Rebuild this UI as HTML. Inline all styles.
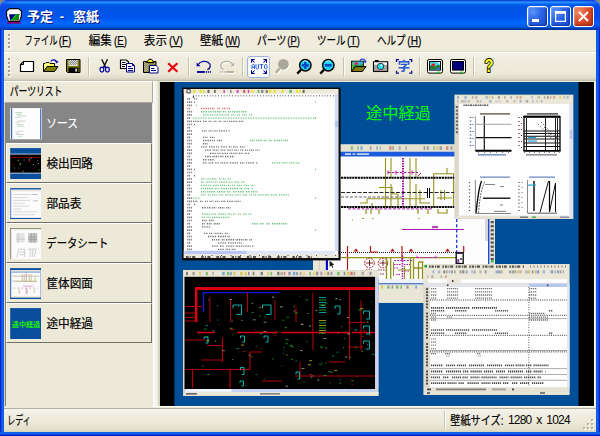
<!DOCTYPE html>
<html lang="ja"><head><meta charset="utf-8"><title>予定 - 窓紙</title>
<style>
html,body{margin:0;padding:0}
body{width:600px;height:436px;overflow:hidden;background:#86867e;font-family:"Liberation Sans","Noto Sans CJK JP",sans-serif;font-size:12px;position:relative}
.abs{position:absolute}
svg{position:absolute;overflow:visible}
svg text{font-family:"Liberation Sans","Noto Sans CJK JP",sans-serif}

#win{position:absolute;left:0;top:0;width:600px;height:436px;background:#ece9d8;border-radius:6.500px 6.500px 0 0;overflow:hidden}
#title{position:absolute;left:0;top:0;width:600px;height:30px;
 background:linear-gradient(to bottom,#0a44d4 0%,#0a4ee0 3%,#3593ff 7%,#288eff 9%,#127dff 11%,#036ffc 13%,#0262ee 14%,#0057e5 20%,#0054e3 24%,#0055eb 56%,#005bf5 66%,#026afe 76%,#0062ef 86%,#0052d6 92%,#0040ab 94%,#003092 100%)}
#title:before{content:"";position:absolute;left:0;top:0;width:18px;height:30px;background:linear-gradient(to right,#1638e6 0%,rgba(22,56,230,0) 100%);opacity:.5}
#title:after{content:"";position:absolute;right:0;top:0;width:18px;height:30px;background:linear-gradient(to left,#1638e6 0%,rgba(22,56,230,0) 100%);opacity:.5}
#bl{position:absolute;left:0;top:30px;width:4px;height:406px;background:linear-gradient(to right,#0019cf 0,#0831d9 25%,#166aee 50%,#0855dd 100%)}
#br{position:absolute;left:596px;top:30px;width:4px;height:406px;background:linear-gradient(to left,#0019cf 0,#0831d9 25%,#166aee 50%,#0855dd 100%)}
#bb{position:absolute;left:0;top:432px;width:600px;height:4px;background:linear-gradient(to bottom,#0855dd 0,#166aee 35%,#0831d9 70%,#0019cf 100%)}
.tb{position:absolute;top:6px;width:21px;height:21px;box-sizing:border-box;border:1px solid #fff;border-radius:3px;
 background:radial-gradient(circle at 25% 25%,#5b93f7 0%,#2a62e6 45%,#1a49c8 100%);box-shadow:inset -1px -1px 2px rgba(0,20,120,.55),inset 1px 1px 1px rgba(160,200,255,.5)}
#bclose{background:radial-gradient(circle at 25% 25%,#ee8a66 0%,#db4a26 50%,#b5301a 100%);box-shadow:inset -1px -1px 2px rgba(110,20,0,.55),inset 1px 1px 1px rgba(255,200,180,.5)}
#menubar{position:absolute;left:4px;top:30px;width:592px;height:22px;background:#efecde}
#mline1{position:absolute;left:4px;top:51px;width:592px;height:1px;background:#dcd8c6}
#mline2{position:absolute;left:4px;top:52px;width:592px;height:1px;background:#fff}
.grip{position:absolute;width:3px;background-image:linear-gradient(to bottom,#a39f8e 0,#a39f8e 2px,transparent 2px,transparent 4px),linear-gradient(to bottom,transparent 0,transparent 1px,#fff 1px,#fff 3px,transparent 3px);background-size:2px 4px,2px 4px;background-position:0 0,1px 0;background-repeat:repeat-y}
#status{position:absolute;left:4px;top:408px;width:592px;height:24px;background:linear-gradient(to bottom,#b4b1a0 0,#b4b1a0 1px,#f5f4ec 1px,#f1efe4 5px,#ece9d8 14px,#e2deca 22px,#d6d1b8 24px)}
#stxt{position:absolute;left:508px;top:413px;font-size:12px;line-height:14px;color:#000;letter-spacing:-.8px;word-spacing:2.3px;white-space:pre}

#toolbar{position:absolute;left:4px;top:53px;width:592px;height:28px;background:linear-gradient(to bottom,#f3f1e6 0,#efecde 8px,#ece9d8 20px,#e0dccb 25px,#cfcbb9 27px,#b9b5a4 28px)}
.sep{position:absolute;top:57px;width:1px;height:19px;background:#c5c2b2}
.sep:after{content:"";position:absolute;left:1px;top:0;width:1px;height:19px;background:#fbfaf5}
#auto{position:absolute;left:247px;top:56px;width:23px;height:22px;box-sizing:border-box;border:1px solid #9db4df;border-radius:3px;background:#fdfdfb}

#panel{position:absolute;left:4px;top:81px;width:156px;height:326px;background:#ece9d8}
#phead{position:absolute;left:4px;top:81px;width:149px;height:22px;box-sizing:border-box;background:#ece9d8;border-top:1px solid #fff;border-left:1px solid #fff;border-right:1px solid #aca899;border-bottom:1px solid #aca899}
.it{position:absolute;left:6px;width:146px;height:40px;box-sizing:border-box;background:#ece9d8;border-top:1px solid #fff;border-left:1px solid #fff;border-right:1px solid #716f64;border-bottom:1px solid #716f64}
.it.sel{background:#868686;border-color:#868686}
#pl{position:absolute;left:4px;top:103px;width:2px;height:303px;background:linear-gradient(to right,#d8d4c2 0,#d8d4c2 1px,#85836f 1px)}
#split{position:absolute;left:153px;top:81px;width:7px;height:326px;background:linear-gradient(to right,#fff 0,#fff 1px,#f7f6f0 1px,#f4f2e8 4px,#e4e1d0 5px,#cdc9b7 7px)}
#vline{position:absolute;left:153px;top:406px;width:443px;height:1px;background:#fff}
#vr{position:absolute;left:594px;top:82px;width:2px;height:325px;background:linear-gradient(to right,#fff 0,#fff 1px,#ece9d8 1px)}

</style></head>
<body>
<div id="win">
<div id="title"></div>
<svg style="left:6px;top:8px" width="16" height="16" viewBox="0 0 16 16">
<path d="M3.500 .6H12.500L15.400 3.200V8L13.500 13.400H2.500L.6 8V3.200Z" fill="#fff" stroke="#000" stroke-width="1.100" stroke-linejoin="round"/>
<path d="M3 6.200H13.400L12.300 12.300H4.100Z" fill="#00007c"/>
<path d="M5 12.300L10.300 6.200H13.400L12.300 12.300Z" fill="#008a00"/>
<path d="M5 12.300L9.800 6.800L10.800 7.200L6.300 12.300Z" fill="#00e400"/>
<rect x="11.300" y="11.200" width="1" height="1.100" fill="#f00"/>
<path d="M1 15.800V15L2 14H14L15 15V15.800Z" fill="#86007e"/>
</svg>
<svg style="left:0;top:0" width="200" height="30" viewBox="0 0 200 30" aria-label="予定 - 窓紙" role="img"><title>予定 - 窓紙</title><text y="22" font-size="13" font-weight="bold" fill="#0a1883"><tspan x="28">予定</tspan><tspan x="60.800">-</tspan><tspan x="74">窓紙</tspan></text><text y="21" font-size="13" font-weight="bold" fill="#fff"><tspan x="27">予定</tspan><tspan x="59.800">-</tspan><tspan x="73">窓紙</tspan></text></svg>
<div class="tb" id="bmin" style="left:527px"><svg style="left:0;top:0" width="19" height="19" viewBox="0 0 19 19"><rect x="4" y="12" width="7" height="3" fill="#fff"/></svg></div>
<div class="tb" id="bmax" style="left:550px"><svg style="left:0;top:0" width="19" height="19" viewBox="0 0 19 19"><path d="M4 4h11v11h-11zM5.200 6.800v7h8.600v-7z" fill="#fff" fill-rule="evenodd"/></svg></div>
<div class="tb" id="bclose" style="left:573px"><svg style="left:0;top:0" width="19" height="19" viewBox="0 0 19 19"><path d="M5 5l9 9M14 5l-9 9" stroke="#fff" stroke-width="2" stroke-linecap="butt"/></svg></div>
<div id="bl"></div><div id="br"></div>
<div id="menubar"></div><div id="mline1"></div><div id="mline2"></div>
<div class="grip" style="left:8px;top:34px;height:16px"></div>
<svg style="left:0;top:0" width="600" height="60" viewBox="0 0 600 60" aria-label="ファイル(F) 編集(E) 表示(V) 壁紙(W) パーツ(P) ツール(T) ヘルプ(H)" role="img"><title>ファイル(F) 編集(E) 表示(V) 壁紙(W) パーツ(P) ツール(T) ヘルプ(H)</title><g font-size="12" fill="#000" stroke="#000" stroke-width=".2"><text x="24.400" y="44.700" textLength="33.100" lengthAdjust="spacingAndGlyphs">ファイル</text><text x="58.800" y="44.800" textLength="12.500" lengthAdjust="spacingAndGlyphs">(F)</text><text x="88.800" y="44.700" textLength="23.100" lengthAdjust="spacingAndGlyphs">編集</text><text x="114" y="44.800" textLength="12.900" lengthAdjust="spacingAndGlyphs">(E)</text><text x="143.800" y="44.700" textLength="23.200" lengthAdjust="spacingAndGlyphs">表示</text><text x="168.900" y="44.800" textLength="14" lengthAdjust="spacingAndGlyphs">(V)</text><text x="200" y="44.700" textLength="23.200" lengthAdjust="spacingAndGlyphs">壁紙</text><text x="224.900" y="44.800" textLength="15.400" lengthAdjust="spacingAndGlyphs">(W)</text><text x="257" y="44.700" textLength="29.300" lengthAdjust="spacingAndGlyphs">パーツ</text><text x="287.300" y="44.800" textLength="12.500" lengthAdjust="spacingAndGlyphs">(P)</text><text x="317" y="44.700" textLength="28.600" lengthAdjust="spacingAndGlyphs">ツール</text><text x="347" y="44.800" textLength="12.800" lengthAdjust="spacingAndGlyphs">(T)</text><text x="377" y="44.700" textLength="28.600" lengthAdjust="spacingAndGlyphs">ヘルプ</text><text x="407.300" y="44.800" textLength="14" lengthAdjust="spacingAndGlyphs">(H)</text></g><rect x="61.5" y="46.100" width="7.0" height="1" fill="#000"/><rect x="116.7" y="46.100" width="7.4" height="1" fill="#000"/><rect x="171.9" y="46.100" width="7.9" height="1" fill="#000"/><rect x="227.5" y="46.100" width="10.3" height="1" fill="#000"/><rect x="289.8" y="46.100" width="7.4" height="1" fill="#000"/><rect x="349.7" y="46.100" width="7.4" height="1" fill="#000"/><rect x="409.9" y="46.100" width="8.8" height="1" fill="#000"/></svg>

<div id="toolbar"></div>
<div class="grip" style="left:8px;top:58px;height:20px"></div>
<div class="sep" style="left:88px"></div><div class="sep" style="left:188px"></div><div class="sep" style="left:242px"></div><div class="sep" style="left:343px"></div><div class="sep" style="left:419px"></div><div class="sep" style="left:473px"></div>
<div id="auto"></div>
<svg style="left:0;top:0" width="600" height="90" viewBox="0 0 600 90"><path d="M23.500 61.500H33.500V71.500H20.500V64.500Z" fill="#fff" stroke="#000" stroke-width="1.200" stroke-linejoin="miter"/><path d="M23.500 61.500V64.500H20.500" fill="none" stroke="#000" stroke-width="1"/><path d="M43.500 71.500V63.500H45l1-1h3l1 1h4.500V66" fill="#ffff60" stroke="#000" stroke-width="1"/><path d="M44 64h10v3h-8l-2 4z" fill="#ffff50"/><path d="M44.500 64.500h1v1h-1zM46.500 64.500h1v1h-1zM48.500 64.500h1v1h-1zM45.500 65.500h1v1h-1zM47.500 65.500h1v1h-1zM44.500 66.500h1v1h-1zM44.500 68.500h1v1h-1z" fill="#fff"/><path d="M43.500 71.500L47 66.500H58L54.500 71.500Z" fill="#808000" stroke="#000" stroke-width="1" stroke-linejoin="round"/><path d="M50.800 61.300C52.300 59.300 55.300 59.300 56.700 61.600" fill="none" stroke="#0000a8" stroke-width="1.250"/><path d="M54.800 61.200H58.700L56.800 63.600Z" fill="#0000a8"/><path d="M66.500 59.500H80V72.500H67.500L66.500 71.500Z" fill="#808000" stroke="#000" stroke-width="1"/><rect x="68.500" y="60" width="9" height="6" fill="#dcdcdc"/><path d="M69 60h1v1h-1zM71 60h1v1h-1zM73 60h1v1h-1zM75 60h1v1h-1zM70 61h1v1h-1zM72 61h1v1h-1zM74 61h1v1h-1zM76 61h1v1h-1zM69 62h1v1h-1zM71 62h1v1h-1zM73 62h1v1h-1zM75 62h1v1h-1zM70 63h1v1h-1zM72 63h1v1h-1zM74 63h1v1h-1zM76 63h1v1h-1zM69 64h1v1h-1zM71 64h1v1h-1zM73 64h1v1h-1zM75 64h1v1h-1z" fill="#8a8a8a"/><rect x="68.500" y="67.500" width="10" height="5" fill="#000"/><rect x="75.300" y="68.600" width="1.800" height="3" fill="#d8d8d8"/><path d="M101.700 59.300L105.600 67.300M107.500 59.300L103.600 67.300" stroke="#000" stroke-width="1.300" fill="none"/><ellipse cx="101.900" cy="69.600" rx="1.900" ry="2.450" fill="none" stroke="#0000a0" stroke-width="1.200"/><ellipse cx="107.400" cy="69.600" rx="1.900" ry="2.450" fill="none" stroke="#0000a0" stroke-width="1.200"/><path d="M103.300 67.800L104.600 66.300M106 67.800L104.700 66.300" stroke="#0000a0" stroke-width="1.200"/><path d="M120.500 60H126.500L128.500 62V68.500H120.500Z" fill="#fff" stroke="#000" stroke-width="1.200"/><path d="M122 62.500h3.500M122 64.500h4.500M122 66.500h3" stroke="#000" stroke-width="1"/><path d="M126.500 63.500H132.500L134.500 65.500V72H126.500Z" fill="#fff" stroke="#000084" stroke-width="1"/><path d="M128 66.500h3.500M128 68.500h5M128 70.500h5" stroke="#000084" stroke-width="1"/><path d="M132.500 63.500V65.500H134.500" fill="none" stroke="#000084" stroke-width="1"/><path d="M143.500 61.500H156V72.500H143.500Z" fill="#8a8640" stroke="#000" stroke-width="1"/><path d="M144 62h1v1h-1zM146 62h1v1h-1zM144 64h1v1h-1zM146 64h1v1h-1zM148 64h1v1h-1zM145 63h1v1h-1zM147 63h1v1h-1zM145 65h1v1h-1zM147 65h1v1h-1zM144 66h1v1h-1zM146 66h1v1h-1zM145 67h1v1h-1zM147 67h1v1h-1zM144 68h1v1h-1zM146 68h1v1h-1zM145 69h1v1h-1zM147 69h1v1h-1zM144 70h1v1h-1zM146 70h1v1h-1zM145 71h1v1h-1zM153 62h1v1h-1zM154 63h1v1h-1z" fill="#b8b8a0"/><path d="M146.500 62.500L149 59.300H151.500L154 62.500Z" fill="#ffff30" stroke="#000" stroke-width="1" stroke-linejoin="round"/><path d="M149.500 65.500H156L158 67.500V73H149.500Z" fill="#fff" stroke="#000084" stroke-width="1"/><path d="M151 68.500h3.500M151 70.500h5" stroke="#000084" stroke-width="1"/><path d="M168.200 63.200L177.400 71.800M177.400 63.200L168.200 71.800" stroke="#e8000c" stroke-width="2.200" fill="none"/><path d="M198.400 64.400A6.100 4.500 0 1 1 207.300 69.700" fill="none" stroke="#000090" stroke-width="1.250"/><path d="M196.600 62.400V66.200H200.500Z" fill="#000090"/><rect x="197" y="71" width="7.800" height="1.900" fill="#000090"/><rect x="205.800" y="71" width="1" height="1.900" fill="#000090"/><rect x="207.800" y="71" width="1" height="1.900" fill="#000090"/><rect x="209.800" y="71" width="1" height="1.900" fill="#000090"/><g transform="translate(431 0) scale(-1 1)"><g transform="translate(-1 1)"><path d="M198.400 64.400A6.100 4.500 0 1 1 207.300 69.700" fill="none" stroke="#ffffff" stroke-width="1.250"/><path d="M196.600 62.400V66.200H200.500Z" fill="#ffffff"/><rect x="197" y="71" width="7.800" height="1.900" fill="#ffffff"/><rect x="205.800" y="71" width="1" height="1.900" fill="#ffffff"/><rect x="207.800" y="71" width="1" height="1.900" fill="#ffffff"/><rect x="209.800" y="71" width="1" height="1.900" fill="#ffffff"/></g><path d="M198.400 64.400A6.100 4.500 0 1 1 207.300 69.700" fill="none" stroke="#b2af9f" stroke-width="1.250"/><path d="M196.600 62.400V66.200H200.500Z" fill="#b2af9f"/><rect x="197" y="71" width="7.800" height="1.900" fill="#b2af9f"/><rect x="205.800" y="71" width="1" height="1.900" fill="#b2af9f"/><rect x="207.800" y="71" width="1" height="1.900" fill="#b2af9f"/><rect x="209.800" y="71" width="1" height="1.900" fill="#b2af9f"/></g><path d="M254.700 59.500H251.500V62.700" fill="none" stroke="#000098" stroke-width="1.050"/><path d="M251.900 59.900L254.500 62.500" stroke="#000098" stroke-width="1.050"/><path d="M263.300 59.500H266.500V62.700" fill="none" stroke="#000098" stroke-width="1.050"/><path d="M266.100 59.900L263.500 62.500" stroke="#000098" stroke-width="1.050"/><path d="M254.700 73.500H251.500V70.300" fill="none" stroke="#000098" stroke-width="1.050"/><path d="M251.900 73.100L254.500 70.500" stroke="#000098" stroke-width="1.050"/><path d="M263.300 73.500H266.500V70.300" fill="none" stroke="#000098" stroke-width="1.050"/><path d="M266.100 73.100L263.500 70.500" stroke="#000098" stroke-width="1.050"/><g fill="none" stroke="#2a62d8" stroke-width="1" stroke-linejoin="miter"><path d="M252 69V65.200L252.700 64.500H253.800L254.500 65.200V69M252 67.200H254.500"/><path d="M256 64.200V68.300L256.700 68.800H257.800L258.500 68.300V64.200"/><path d="M259.700 64.600H263.300M261.500 64.600V69"/><path d="M264.500 65.200L265.200 64.500H266.300L267 65.200V68.100L266.300 68.800H265.200L264.500 68.100Z"/></g><path d="M279.800 68.300L276 72.800" stroke="#fff" stroke-width="2.200" transform="translate(1 1)"/><circle cx="284.300" cy="65.200" r="5.400" fill="#fff"/><path d="M279.800 68.300L276 72.800" stroke="#aaa799" stroke-width="2.200"/><circle cx="283.400" cy="64.300" r="5.400" fill="#aaa799"/><path d="M301.0 69.700L297.3 73.600" stroke="#000" stroke-width="2.300"/><circle cx="305.300" cy="65.200" r="5.700" fill="#16d4ff" stroke="#000" stroke-width="1.500"/><path d="M302.800 61.800a4.200 4.200 0 0 1 5 0" fill="none" stroke="#b8f4ff" stroke-width="1"/><rect x="301.800" y="64" width="7" height="2.600" fill="#0c4cc0"/><rect x="304.0" y="61.800" width="2.600" height="7" fill="#0c4cc0"/><path d="M324.0 69.700L320.3 73.600" stroke="#000" stroke-width="2.300"/><circle cx="328.300" cy="65.200" r="5.700" fill="#16d4ff" stroke="#000" stroke-width="1.500"/><path d="M325.800 61.800a4.200 4.200 0 0 1 5 0" fill="none" stroke="#b8f4ff" stroke-width="1"/><rect x="324.800" y="64" width="7" height="2.600" fill="#0c4cc0"/><path d="M351.600 71.500V61.300H363.200V66.500" fill="#2c9c48" stroke="#000" stroke-width="1.100"/><rect x="352.800" y="61.800" width="10" height="5" fill="#26a044"/><path d="M352.800 61.800H362.800V63.600L359.500 65.300L356.500 63.800L352.800 65.500Z" fill="#38b4e8"/><ellipse cx="356.300" cy="63.500" rx="1.700" ry="1.200" fill="#e82020"/><path d="M352.300 62.500V70" stroke="#f0e820" stroke-width="1" stroke-dasharray="1 1"/><path d="M351.600 71.500L355.200 66.600H366L362.400 71.500Z" fill="#7c7c18" stroke="#000" stroke-width="1" stroke-linejoin="round"/><path d="M359.800 60.600C361.300 58.700 364.200 58.700 365.300 60.800" fill="none" stroke="#1c3cc8" stroke-width="1.200"/><path d="M366.600 60.400L365.600 63.300L362.900 61.300Z" fill="#1c3cc8"/><rect x="375" y="60" width="3.600" height="2" fill="#000"/><rect x="373.500" y="61.800" width="14.200" height="9.700" fill="#a4a4a4" stroke="#000" stroke-width="1.100"/><rect x="374.100" y="62.400" width="13" height="2.400" fill="#f4f4f4"/><circle cx="380.600" cy="66.400" r="3.400" fill="#222"/><circle cx="380.600" cy="66.400" r="2.700" fill="#20e0f8"/><circle cx="381.400" cy="65.500" r="1" fill="#d8fcff"/><g fill="none" stroke="#0c0c8c" stroke-width="1.300"><path d="M399 59.600H396.500V62M396.500 70.800V73.200H399M409.200 59.600H411.700V62M411.700 70.800V73.200H409.200"/></g><text x="397.700" y="71.300" font-size="12.400" font-weight="bold" fill="#2458d0">字</text><rect x="427.500" y="59.500" width="15" height="13.600" rx="1.600" fill="#fff" stroke="#000" stroke-width="1"/><rect x="429.500" y="61.500" width="11" height="8.600" fill="#00007c" stroke="#000" stroke-width="1"/><rect x="437.400" y="71.600" width="2.400" height="1.500" fill="#10d010"/><rect x="430" y="62" width="10" height="7.600" fill="#48d8f0"/><path d="M437 62H440V64.200Z" fill="#f4ffff"/><path d="M430 69.600V66l2.500-1 3 1.500 2.500-2 2 1.500V69.600Z" fill="#1f7a2c"/><ellipse cx="433.300" cy="65" rx="1.900" ry="1.400" fill="#f01818"/><path d="M435 69.600l2.500-1.800H440V69.600z" fill="#4468e0"/><rect x="450.500" y="59.500" width="15" height="13.600" rx="1.600" fill="#fff" stroke="#000" stroke-width="1"/><rect x="452.500" y="61.500" width="11" height="8.600" fill="#00007c" stroke="#000" stroke-width="1"/><rect x="460.400" y="71.600" width="2.400" height="1.500" fill="#10d010"/><text x="484.600" y="72.200" font-family="Liberation Sans, sans-serif" font-weight="bold" font-size="17.500" fill="#ffff18" stroke="#000" stroke-width="1.800" stroke-linejoin="round" paint-order="stroke" textLength="9" lengthAdjust="spacingAndGlyphs">?</text></svg>

<div id="panel"></div>
<div id="phead"></div>
<div class="it sel" style="top:103px"></div><div class="it" style="top:143px"></div><div class="it" style="top:183px"></div><div class="it" style="top:223px"></div><div class="it" style="top:263px"></div><div class="it" style="top:303px"></div>
<div id="pl"></div>
<div id="split"></div>
<svg style="left:0;top:0" width="160" height="410" viewBox="0 0 160 410" aria-label="パーツリスト ソース 検出回路 部品表 データシート 筐体図面 途中経過" role="img"><title>パーツリスト ソース 検出回路 部品表 データシート 筐体図面 途中経過</title><text x="9.800" y="96.200" font-size="12" fill="#000" stroke="#000" stroke-width=".2" textLength="52.400" lengthAdjust="spacingAndGlyphs">パーツリスト</text><rect x="10.200" y="108.100" width="31.600" height="31.200" fill="#fdfdfd"/><rect x="11.100" y="108.39999999999999" width="1.100" height="30.600" fill="#2a5cb0"/><rect x="40.200" y="108.39999999999999" width="1" height="30.600" fill="#2a5cb0"/><rect x="15.200" y="112.100" width="7" height=".8" fill="#a8d4a8"/><rect x="16.200" y="113.800" width="5" height=".8" fill="#c4c4c4"/><rect x="17.200" y="115.500" width="9" height=".8" fill="#b4dcb4"/><rect x="15.200" y="117.200" width="6" height=".8" fill="#d0d0d0"/><rect x="17.200" y="120.600" width="8" height=".8" fill="#c4c4c4"/><rect x="15.200" y="122.300" width="5" height=".8" fill="#b4dcb4"/><rect x="16.200" y="124.0" width="7" height=".8" fill="#d0d0d0"/><rect x="17.200" y="125.700" width="7" height=".8" fill="#a8d4a8"/><rect x="17.200" y="130.800" width="6" height=".8" fill="#d0d0d0"/><rect x="15.200" y="132.500" width="4" height=".8" fill="#a8d4a8"/><rect x="16.200" y="134.200" width="8" height=".8" fill="#c4c4c4"/><rect x="17.200" y="135.900" width="5" height=".8" fill="#b4dcb4"/><rect x="10.200" y="148.100" width="30.800" height="30.900" fill="#0a4f9e"/><rect x="10.200" y="153.700" width="30.800" height="19.800" fill="#e8ebf8"/><rect x="10.200" y="154.500" width="30.800" height="18.200" fill="#000"/><rect x="11.200" y="157.100" width="29" height=".9" fill="#900000"/><rect x="13.200" y="164.100" width="0.80" height="1.60" fill="#c00000" opacity=".85"/><rect x="17.700" y="159.600" width="1.20" height="1.20" fill="#c8c800" opacity=".85"/><rect x="19.700" y="163.100" width="0.96" height="2.00" fill="#c8c800" opacity=".85"/><rect x="23.200" y="159.600" width="1.60" height="0.80" fill="#00a0a0" opacity=".85"/><rect x="28.700" y="158.600" width="1.20" height="3.200" fill="#e02020" opacity=".85"/><rect x="28.700" y="158.600" width="1.20" height="1.04" fill="#00d090" opacity=".85"/><rect x="30.700" y="157.600" width="0.96" height="0.96" fill="#e0e0e0" opacity=".85"/><rect x="32.700" y="164.100" width="1.04" height="1.20" fill="#c0c0c0" opacity=".85"/><rect x="37.200" y="160.100" width="0.80" height="1.04" fill="#60a060" opacity=".85"/><rect x="38.700" y="169.100" width="0.80" height="1.60" fill="#00c000" opacity=".85"/><rect x="14.200" y="167.100" width="0.80" height="1.60" fill="#40a040" opacity=".85"/><rect x="33.200" y="167.600" width="1.04" height="1.04" fill="#d01010" opacity=".85"/><rect x="22.700" y="171.100" width="0.80" height="0.80" fill="#ffffff" opacity=".85"/><rect x="37.700" y="163.100" width="1.20" height="0.80" fill="#d0d0d0" opacity=".85"/><rect x="18.200" y="168.100" width="0.80" height="0.80" fill="#808000" opacity=".85"/><rect x="10.200" y="188.100" width="30.800" height="30.900" fill="#fbfbfb"/><rect x="10.200" y="188.100" width="30.800" height="1.600" fill="#0a4f9e"/><rect x="10.200" y="188.100" width="1" height="30.900" fill="#5a84c4"/><rect x="11.200" y="189.700" width="29.800" height="1.800" fill="#ebe8dc"/><rect x="10.200" y="217.900" width="30.800" height="1.100" fill="#0a4f9e"/><rect x="13.200" y="194.100" width="24" height=".8" fill="#cfcfcf"/><rect x="13.200" y="197.0" width="14" height=".8" fill="#cfcfcf"/><rect x="13.200" y="199.900" width="17" height=".8" fill="#cfcfcf"/><rect x="13.200" y="202.800" width="12" height=".8" fill="#cfcfcf"/><rect x="13.200" y="205.700" width="16" height=".8" fill="#cfcfcf"/><rect x="13.200" y="208.600" width="8" height=".8" fill="#cfcfcf"/><rect x="13.200" y="211.500" width="24" height=".8" fill="#cfcfcf"/><rect x="13.200" y="214.400" width="22" height=".8" fill="#cfcfcf"/><rect x="33.200" y="194.100" width="4" height=".9" fill="#9ab0e0"/><rect x="33.200" y="200.100" width="5" height="1.500" fill="#d0d0d8"/><rect x="10.200" y="228.100" width="30.800" height="30.900" fill="#fbfbfb"/><rect x="10.200" y="228.100" width="30.800" height="1" fill="#85836f"/><rect x="10.200" y="228.100" width="1" height="30.900" fill="#85836f"/><rect x="11.200" y="229.100" width="29.800" height="1.300" fill="#eeebe0"/><rect x="16.200" y="233.100" width="8.500" height="9.500" fill="#e4e4e4"/><rect x="28.200" y="233.100" width="9" height="9.500" fill="#c4c4c4"/><g stroke="#9a9a9a" stroke-width=".8"><path d="M28.200 237.100h9M28.200 239.600h9M31.200 233.100v9.500M34.200 233.100v9.500"/></g><g stroke="#c4c4c4" stroke-width=".8" fill="none"><path d="M18.200 233.100v9.500M16.200 239.100h8.500M16.700 257.100l2-8h6v8M19.200 252.100h6M19.200 254.600h6M28.200 249.100h8l-2 8M30.200 249.100v8M33.200 249.100l-1 8"/></g><rect x="10.200" y="268.100" width="30.800" height="30.900" fill="#fbfbfb"/><rect x="10.200" y="268.100" width="30.800" height="2" fill="#0a4f9e"/><rect x="10.200" y="268.100" width="1" height="30.900" fill="#2a5cb0"/><rect x="40.0" y="270.100" width="1" height="27" fill="#a8c0ec"/><rect x="11.200" y="270.100" width="28.800" height="1.500" fill="#e8e4d4"/><rect x="11.200" y="271.600" width="28.800" height="1" fill="#6a94e0"/><rect x="10.200" y="297.40000000000003" width="30.800" height="1.600" fill="#0a4f9e"/><rect x="11.200" y="295.90000000000003" width="28.800" height="1.500" fill="#ece8da"/><g stroke-width=".8" fill="none" opacity=".8"><path d="M12.200 276.100h27M12.200 281.100h24" stroke="#b0a0a8"/><path d="M22.200 274.100v8M24.200 274.100v8M29.200 274.100v8M31.200 274.100v8M35.200 276.100v5M15.200 281.600h22M19.200 289.100v5M27.200 289.100v5M34.200 289.100v4" stroke="#b4b060"/><path d="M26.200 273.100v9M23.200 286.100h10M26.200 288.100v6" stroke="#c070c0"/><path d="M13.200 288.100h25" stroke="#c09090" stroke-dasharray="2 2"/></g><rect x="10.200" y="308.100" width="30.800" height="30.900" fill="#0a4f9e"/><text x="11.800" y="326.900" font-size="7" font-weight="bold" fill="#20f000" textLength="28.400" lengthAdjust="spacingAndGlyphs">途中経過</text><g font-size="12" stroke-width=".2"><text x="46.300" y="128.300" fill="#fff" stroke="#fff" textLength="31.700" lengthAdjust="spacingAndGlyphs">ソース</text><text x="46.400" y="168.300" fill="#000" stroke="#000" textLength="46.600" lengthAdjust="spacingAndGlyphs">検出回路</text><text x="46.400" y="208.300" fill="#000" stroke="#000" textLength="34.900" lengthAdjust="spacingAndGlyphs">部品表</text><text x="46.300" y="248.300" fill="#000" stroke="#000" textLength="62" lengthAdjust="spacingAndGlyphs">データシート</text><text x="46.500" y="288.300" fill="#000" stroke="#000" textLength="46.500" lengthAdjust="spacingAndGlyphs">筐体図面</text><text x="46.400" y="328.300" fill="#000" stroke="#000" textLength="46.600" lengthAdjust="spacingAndGlyphs">途中経過</text></g></svg>
<div id="vline"></div><div id="vr"></div>

<svg style="left:160px;top:82px" width="434" height="324" viewBox="160 82 434 324" aria-label="途中経過" role="img"><title>途中経過</title><rect x="160" y="82" width="434" height="324" fill="#000"/><rect x="174.400" y="82" width="404.100" height="324" fill="#004e98"/><g><rect x="340" y="144.500" width="155" height="135" fill="#fdfdfd"/><rect x="313" y="255" width="27" height="16" fill="#fdfdfd"/><rect x="313" y="255" width="12.800" height="16" fill="#e9e6d8"/><rect x="319" y="255" width="0.800" height="16" fill="#cfcbbb"/><rect x="325.800" y="255" width="2.200" height="16" fill="#0000d8"/><path d="M329.600 260.800V266.800L331.200 265.400L332.400 267.800L333.300 267.300L332.200 265L334.200 264.800Z" fill="#111"/><rect x="340" y="144.500" width="154" height="7.200" fill="#e6e2d2"/><rect x="350.700" y="146.300" width="2.400" height="3.600" fill="#30a030" opacity="0.5"/><rect x="357.100" y="146.300" width="1.600" height="3.600" fill="#30a030" opacity="0.5"/><rect x="360.300" y="146.300" width="2.400" height="3.600" fill="#2080d0" opacity="0.5"/><rect x="369.900" y="146.300" width="1.600" height="3.600" fill="#505870" opacity="0.5"/><rect x="376.300" y="146.300" width="1.600" height="3.600" fill="#2080d0" opacity="0.5"/><rect x="379.500" y="146.300" width="1.600" height="3.600" fill="#8a8a8a" opacity="0.5"/><rect x="389.100" y="146.300" width="2.400" height="3.600" fill="#c03030" opacity="0.5"/><rect x="392.300" y="146.300" width="1.600" height="3.600" fill="#505870" opacity="0.5"/><rect x="398.700" y="146.300" width="2" height="3.600" fill="#707070" opacity="0.5"/><rect x="405.100" y="146.300" width="1.600" height="3.600" fill="#707070" opacity="0.5"/><rect x="423.600" y="146.300" width="1.600" height="3.600" fill="#404040" opacity="0.5"/><rect x="426.800" y="146.300" width="2" height="3.600" fill="#505870" opacity="0.5"/><rect x="433.200" y="146.300" width="1.600" height="3.600" fill="#30a030" opacity="0.5"/><rect x="436.400" y="146.300" width="2" height="3.600" fill="#c8b400" opacity="0.5"/><rect x="439.600" y="146.300" width="2.400" height="3.600" fill="#505870" opacity="0.5"/><rect x="446" y="146.300" width="2.400" height="3.600" fill="#c03030" opacity="0.5"/><rect x="450.500" y="146.300" width="2" height="3.600" fill="#505870" opacity="0.5"/><rect x="455" y="146.300" width="1.600" height="3.600" fill="#c03030" opacity="0.5"/><rect x="461.400" y="146.300" width="1.600" height="3.600" fill="#707070" opacity="0.5"/><rect x="465.900" y="146.300" width="2.400" height="3.600" fill="#8a8a8a" opacity="0.5"/><rect x="469.100" y="146.300" width="1.600" height="3.600" fill="#30a030" opacity="0.5"/><rect x="476.800" y="146.300" width="1.600" height="3.600" fill="#2080d0" opacity="0.5"/><rect x="483.200" y="146.300" width="1.600" height="3.600" fill="#505870" opacity="0.5"/><rect x="486.400" y="146.300" width="2.400" height="3.600" fill="#8040c0" opacity="0.5"/><rect x="340" y="151.700" width="154" height="4.800" fill="#1c5cdc"/><rect x="345" y="153.300" width="6" height="1.600" fill="#fff" opacity=".85"/><rect x="352.500" y="153.300" width="3" height="1.600" fill="#fff" opacity=".7"/><rect x="357" y="153.300" width="12" height="1.600" fill="#fff" opacity=".8"/><path d="M385.500 158V178M391 158V178M410 158V178M416 158V178M385.500 178V207M391 184V207M410 178V207M416 184V207" fill="none" stroke="#94941c" stroke-width="1.100"/><path d="M379 187.500H392V194H398M367 198.700H425M367 198.700V203H360M372 203V207M398 194V207M420 190V203H430M433.700 207V173.700H453.500V207M447 173.700V168M441 190V200M444.500 190V200M437 198H452" fill="none" stroke="#94941c" stroke-width="1.100"/><path d="M403 158V207" fill="none" stroke="#a818a8" stroke-width="2" stroke-dasharray="1.500 1"/><path d="M388 172.500H418" fill="none" stroke="#a818a8" stroke-width="1.200" stroke-dasharray="2.500 1.500"/><path d="M388 170.500v4M396 170.500v4M412 170.500v4M418 176l3 -3" fill="none" stroke="#a818a8" stroke-width="1"/><path d="M341 177.700H454.500" fill="none" stroke="#000" stroke-width="2" stroke-dasharray="2.200 .6"/><path d="M341 192.500H454.500" fill="none" stroke="#222" stroke-width="1" stroke-dasharray="4 1.500"/><path d="M341 197H402" fill="none" stroke="#555" stroke-width="0.900" stroke-dasharray="3 1.500"/><path d="M341 207H454.500" fill="none" stroke="#000" stroke-width="2" stroke-dasharray="2.200 .6"/><path d="M348 208.900H432" fill="none" stroke="#a818a8" stroke-width="1" stroke-dasharray="3 1.500"/><path d="M427.500 188v10M429.500 188v10" fill="none" stroke="#000" stroke-width="1"/><path d="M366 209V214M371 209V214M379 209V214M418 209V214M428 209V214M438 209V213H447V209" fill="none" stroke="#94941c" stroke-width="1.200"/><path d="M362 218.500h2M372 218.500h1.500M418 218.500h1.500M352 220h1" fill="none" stroke="#94941c" stroke-width="0.900"/><path d="M402 229.500H464" fill="none" stroke="#a818a8" stroke-width="1"/><rect x="432" y="226" width="6" height="2.200" fill="#a818a8" opacity=".8"/><path d="M456.700 219V262" fill="none" stroke="#1830e0" stroke-width="1.300" stroke-dasharray="3 2.200"/><path d="M341 252.500H460" fill="none" stroke="#222" stroke-width="1" stroke-dasharray="1 1"/><path d="M347.500 246V271M370.500 246V252H378M402 246V260M463.700 246V252" fill="none" stroke="#b01818" stroke-width="1.200"/><path d="M353.500 251.500L356 248.500L358.500 251.500Z" fill="#b01818"/><path d="M390.0 251.500L392.500 248.500L395.0 251.500Z" fill="#b01818"/><path d="M408.500 251.500L411 248.500L413.500 251.500Z" fill="#b01818"/><path d="M445.0 251.500L447.500 248.500L450.0 251.500Z" fill="#b01818"/><path d="M341 257.600H456" fill="none" stroke="#94941c" stroke-width="1.200"/><circle cx="369.500" cy="263" r="4.800" fill="none" stroke="#b01818" stroke-width="1" stroke-dasharray="2 1"/><circle cx="383" cy="263" r="4.800" fill="none" stroke="#b01818" stroke-width="1" stroke-dasharray="2 1"/><path d="M366 263h7M369.500 260v6M379.500 263h7M383 260v6" fill="none" stroke="#500" stroke-width="0.800"/><path d="M386.500 257.600V279M390.700 257.600V279M410.500 257.600V279M413.500 257.600V279M418.500 262V279M422.500 262V279M413.500 268h9M418.500 262h5" fill="none" stroke="#94941c" stroke-width="1.300"/><path d="M402.500 255.500V279" fill="none" stroke="#a818a8" stroke-width="1.600" stroke-dasharray="1.500 1"/><path d="M394 260.500H412M417 257.500H436" fill="none" stroke="#a818a8" stroke-width="1.100" stroke-dasharray="2 1.200"/><path d="M417 255.500v3M436 255.500v3" fill="none" stroke="#ff30ff" stroke-width="1.200"/><path d="M394 264.500h7M404 264.500h6M394 268h5M405 271h4M396 274.500h5" fill="none" stroke="#a818a8" stroke-width="1" stroke-dasharray="1.500 1"/><path d="M393.500 262V276M398 270H410.500M404.500 266V279" fill="none" stroke="#94941c" stroke-width="1"/><path d="M378 270h8M380 274h5M366 270h6" fill="none" stroke="#7a1010" stroke-width="0.900" stroke-dasharray="1.500 1"/><rect x="456.200" y="252.600" width="7" height="11" fill="#fff" stroke="#111" stroke-width="1.400"/><rect x="457" y="252" width="5.500" height="2" fill="#402040"/><rect x="457.300" y="259" width="2" height="4" fill="#9040b0"/><rect x="460.300" y="258" width="1.500" height="2" fill="#333"/><rect x="485" y="219" width="3" height="22" fill="#d8d8dc"/><rect x="488" y="219" width="1.600" height="45" fill="#1846e0"/><rect x="489.600" y="219" width="5.400" height="45" fill="#e4e0d0"/><rect x="490.600" y="221" width="3.200" height="2.200" fill="#333" opacity=".8"/><rect x="490.600" y="225.100" width="3.200" height="2.200" fill="#333" opacity=".8"/><rect x="490.600" y="229.200" width="3.200" height="2.200" fill="#333" opacity=".8"/><rect x="490.600" y="233.300" width="3.200" height="2.200" fill="#333" opacity=".8"/><rect x="490.600" y="237.400" width="3.200" height="2.200" fill="#333" opacity=".8"/><rect x="490.600" y="241.500" width="3.200" height="2.200" fill="#333" opacity=".8"/><rect x="490.600" y="245.600" width="3.200" height="2.200" fill="#333" opacity=".8"/><rect x="490.600" y="249.700" width="3.200" height="2.200" fill="#333" opacity=".8"/><rect x="490.600" y="253.800" width="3.200" height="2.200" fill="#333" opacity=".8"/><rect x="490.600" y="257.900" width="3.200" height="2.200" fill="#333" opacity=".8"/><rect x="491" y="260" width="2.500" height="2.500" fill="#30c030"/></g><text x="366" y="119" font-size="16.200" fill="#00ff00" textLength="64.800" lengthAdjust="spacingAndGlyphs">途中経過</text><g><rect x="181.900" y="87.500" width="158.700" height="172.900" fill="#0c0c0c"/><rect x="183.800" y="89" width="154.500" height="169" fill="#fefefe"/><rect x="183.800" y="89" width="154.500" height="4.600" fill="#ece8da"/><rect x="187" y="89.700" width="3.200" height="3.200" fill="#fff" stroke="#222" stroke-width=".8"/><rect x="193" y="89.900" width="2.400" height="3" fill="#e8e000" opacity="0.8"/><rect x="199.600" y="89.900" width="2" height="3" fill="#e8e000" opacity="0.8"/><rect x="202.900" y="89.900" width="1.600" height="3" fill="#e8e000" opacity="0.8"/><rect x="207.500" y="89.900" width="2" height="3" fill="#404040" opacity="0.8"/><rect x="214.100" y="89.900" width="1.600" height="3" fill="#404040" opacity="0.8"/><rect x="223.400" y="89.900" width="1.600" height="3" fill="#c020c0" opacity="0.8"/><rect x="230" y="89.900" width="1.600" height="3" fill="#707070" opacity="0.8"/><rect x="236.600" y="89.900" width="2" height="3" fill="#c020c0" opacity="0.8"/><rect x="243.200" y="89.900" width="2" height="3" fill="#c03030" opacity="0.8"/><rect x="247.800" y="89.900" width="1.600" height="3" fill="#c020c0" opacity="0.8"/><rect x="251.100" y="89.900" width="2.400" height="3" fill="#e8e000" opacity="0.8"/><rect x="257.700" y="89.900" width="1.600" height="3" fill="#30a030" opacity="0.8"/><rect x="261" y="89.900" width="2.400" height="3" fill="#707070" opacity="0.8"/><rect x="265.600" y="89.900" width="2.400" height="3" fill="#707070" opacity="0.8"/><rect x="268.900" y="89.900" width="2.400" height="3" fill="#e8e000" opacity="0.8"/><rect x="273.500" y="89.900" width="2.400" height="3" fill="#e8e000" opacity="0.8"/><rect x="281.400" y="89.900" width="2.400" height="3" fill="#e8e000" opacity="0.8"/><rect x="289.400" y="89.900" width="2.400" height="3" fill="#30a030" opacity="0.8"/><rect x="296" y="89.900" width="2" height="3" fill="#e8e000" opacity="0.8"/><rect x="299.300" y="89.900" width="1.600" height="3" fill="#e8e000" opacity="0.8"/><rect x="302.600" y="89.900" width="2" height="3" fill="#404040" opacity="0.8"/><path d="M193 95.700H335" fill="none" stroke="#555" stroke-width="1.400" stroke-dasharray=".7 2.100"/><path d="M193.500 96.200v1.500" fill="none" stroke="#000" stroke-width="1.200"/><path d="M187.300 98.900H190.200M187.300 102.100H191.800M187.300 105.300H191.800M187.300 111.700H191.800M187.300 114.900H191.800M187.300 118.100H190.200M187.300 121.300H191.800M187.300 124.500H191.800M187.300 127.700H190.200M187.300 130.900H191.800M187.300 134.100H191.800M187.300 137.300H190.200M187.300 140.500H191.800M187.300 143.700H191.800M187.300 146.900H190.200M187.300 150.100H191.800M187.300 153.300H191.800M187.300 156.500H190.200M187.300 159.700H191.800M187.300 162.900H191.800M187.300 166.100H190.200M187.300 169.300H191.800M187.300 172.500H191.800M187.300 175.700H190.200M187.300 178.900H191.800M187.300 182.100H191.800M187.300 185.300H190.200M187.300 188.500H191.800M187.300 191.700H191.800M187.300 194.900H190.200M187.300 198.100H191.800M187.300 201.300H191.800M187.300 204.500H190.200M187.300 207.700H191.800M187.300 210.900H191.800M187.300 214.100H190.200M187.300 217.300H191.800M187.300 220.500H191.800M187.300 223.700H190.200M187.300 226.900H191.800M187.300 230.100H191.800M187.300 233.300H190.200M187.300 236.500H191.800M187.300 239.700H191.800M187.300 242.900H190.200M187.300 246.100H191.800M187.300 249.300H191.800" fill="none" stroke="#333333" stroke-width="1.700" stroke-dasharray="1.100 .750" opacity=".72"/><path d="M194 98.900H197M194 102.100H195.500M193 121.300H201M203 121.300H207M208.600 121.300H211.600M213.600 121.300H216.600M218.600 121.300H221.600M223.600 121.300H227.600M229.200 121.300H237.200M238.800 121.300H243.800M194 124.500H195.500M202 130.900H207M208.600 130.900H212.600M213.800 130.900H217.800M219 130.900H227M228.600 130.900H230M203 137.300H208M210 137.300H215M203 140.500H211M212.200 140.500H215.200M217.200 140.500H222M203 143.700H208M201 146.900H207M209 146.900H215M216.200 146.900H219.200M220.800 146.900H226.800M228.800 146.900H231.800M233 146.900H238M240 146.900H245M205 150.100H211M212.600 150.100H218.600M220.600 150.100H225.600M226.800 150.100H232.800M234.400 150.100H238.400M240.400 150.100H243.400M245 150.100H248M249.200 150.100H254.200M255.400 150.100H259.400M210 153.300H216M217.600 153.300H220.600M221.800 153.300H227.800M229.400 153.300H237.400M239 153.300H243M244.600 153.300H250M205 156.500H211M212.600 156.500H218.600M219.800 156.500H223.800M225 156.500H229M230.200 156.500H234.200M203 159.700H207M208.200 159.700H214.200M203 162.900H207M208.600 162.900H213.600M214.800 162.900H218.800M220.400 162.900H228.400M230 162.900H238M240 162.900H245M246.200 162.900H254.200M256.200 162.900H258M194 169.300H195.500M194 175.700H195.500M193 201.300H198M200 201.300H203M205 201.300H208M209.600 201.300H213.600M215.200 201.300H219.200M220.800 201.300H225.800M227 201.300H233M234.600 201.300H240.600M194 204.500H195.500M202 207.700H206M207.200 207.700H211.200M212.400 207.700H216.400M218.400 207.700H224.400M226.400 207.700H230.400M202 220.500H207M209 220.500H214M202 223.700H205M207 223.700H212M213.600 223.700H220M202 226.900H210M204 233.300H208M209.200 233.300H213.200M214.800 233.300H222.800M224.800 233.300H227.800M229.800 233.300H230M208 236.500H216M218 236.500H226M227.600 236.500H230M212 239.700H215M216.200 239.700H220.200M221.800 239.700H224.800M226 239.700H234M235.600 239.700H243.600M244.800 239.700H247.800M249.400 239.700H252M218 242.900H226M228 242.900H236M237.200 242.900H242.200M243.800 242.900H244M212 246.100H218M220 246.100H224M226 246.100H234M235.600 246.100H243.600M244.800 246.100H250.800M252 246.100H254M218 249.300H224M225.600 249.300H230.600M231.800 249.300H235.800" fill="none" stroke="#222222" stroke-width="1.350" stroke-dasharray=".950 .800" opacity=".7"/><path d="M315 102.100H316.500M196 105.300H197.500M201 111.700H207M208.200 111.700H212.200M213.400 111.700H221.400M223 111.700H226M228 111.700H231M232.200 111.700H240.200M241.400 111.700H247M203 114.900H209M210.200 114.900H214.200M215.400 114.900H223.400M224.600 114.900H229.600M231.200 114.900H235.200M237.200 114.900H240.200M242.200 114.900H247.200M249.200 114.900H252M315 118.100H316.500M250 140.500H255M256.200 140.500H262.200M263.800 140.500H266.800M268.800 140.500H271.800M273.800 140.500H281.800M283.400 140.500H288M272 162.900H280M281.600 162.900H287.600M289.200 162.900H295.200M296.400 162.900H300M315 169.300H316.500M201 178.900H205M206.600 178.900H210.600M211.800 178.900H216.800M218.800 178.900H221.800M223 178.900H226M228 178.900H231M201 182.100H204M205.600 182.100H213.600M214.800 182.100H217.800M219 182.100H227M228.600 182.100H232.600M234.600 182.100H239.600M241.200 182.100H245M201 185.300H207M208.200 185.300H211.200M212.800 185.300H218.800M220.400 185.300H226.400M228 185.300H231M232.200 185.300H235.200M237.200 185.300H242.200M244.200 185.300H249.200M250.800 185.300H254.800M201 188.500H204M205.200 188.500H213.200M214.800 188.500H218.800M220.800 188.500H228.800M230 188.500H238M239.600 188.500H242.600M244.600 188.500H249.600M251.600 188.500H253M201 191.700H206M207.200 191.700H215.200M217.200 191.700H225.200M226.800 191.700H230.800M232.800 191.700H236.800M238 191.700H244M246 191.700H250M251.200 191.700H258M201 194.900H206M208 194.900H211M212.200 194.900H217.200M218.800 194.900H223.800M225 194.900H233M234.600 194.900H240.600M242.600 194.900H247.600M249.200 194.900H252.200M253.400 194.900H256.400M257.600 194.900H263.600M264.800 194.900H269.800M271 194.900H277M279 194.900H287M288.200 194.900H289M315 198.100H316.500M202 214.100H210M211.600 214.100H216.600M217.800 214.100H225.800M227.800 214.100H231.800M233 214.100H236M238 214.100H241M243 214.100H247M248.600 214.100H252M202 217.300H205M206.600 217.300H210.600M212.200 217.300H220.200M221.400 217.300H229.400M252 223.700H258M260 223.700H264M266 223.700H270M272 223.700H280M281.200 223.700H287.200M315 230.100H316.500" fill="none" stroke="#18a030" stroke-width="1.350" stroke-dasharray=".950 .800" opacity=".7"/><path d="M187.300 108.500H190.200" fill="none" stroke="#b02020" stroke-width="1.700" stroke-dasharray="1.100 .750" opacity=".72"/><path d="M201 108.500H209M210.200 108.500H215.200M217.200 108.500H220.200M222.200 108.500H226.200M227.400 108.500H230.400" fill="none" stroke="#c02020" stroke-width="1.350" stroke-dasharray=".950 .800" opacity=".7"/><path d="M193 118.100H316M193 198.100H200" fill="none" stroke="#18a030" stroke-width="0.900" stroke-dasharray="1.400 1.100" opacity=".8"/><rect x="334.800" y="94" width="3.500" height="157" fill="#d4dcf4"/><rect x="335.200" y="121" width="2.700" height="6" fill="#b0c0ec"/><rect x="183.800" y="250.800" width="151" height="3.200" fill="#dfe6fa"/><rect x="184.500" y="250.800" width="62" height="3.200" fill="#b8c8f2"/><rect x="183.800" y="254" width="154.500" height="4" fill="#ebe8dc"/><path d="M186 257H312" fill="none" stroke="#222" stroke-width="1.500" stroke-dasharray="2.500 1.200 1 1.500 3 6"/><path d="M202 255.500H336" fill="none" stroke="#555" stroke-width="1.200" stroke-dasharray="1 8.500"/></g><g><rect x="454.400" y="94.600" width="119" height="124.400" fill="#d9d5c5"/><rect x="455" y="95.200" width="117.800" height="8.600" fill="#ece8d8"/><rect x="457" y="96" width="2" height="2.800" fill="#3a70c8" opacity="0.45"/><rect x="464.400" y="96" width="2.400" height="2.800" fill="#3a70c8" opacity="0.45"/><rect x="471.900" y="96" width="1.600" height="2.800" fill="#707070" opacity="0.45"/><rect x="475" y="96" width="2.400" height="2.800" fill="#8a8a8a" opacity="0.45"/><rect x="485.500" y="96" width="2.400" height="2.800" fill="#6088d0" opacity="0.45"/><rect x="488.600" y="96" width="1.600" height="2.800" fill="#d8b800" opacity="0.45"/><rect x="491.700" y="96" width="1.600" height="2.800" fill="#707070" opacity="0.45"/><rect x="497.900" y="96" width="2" height="2.800" fill="#505050" opacity="0.45"/><rect x="504.100" y="96" width="1.600" height="2.800" fill="#707070" opacity="0.45"/><rect x="510.300" y="96" width="1.600" height="2.800" fill="#707070" opacity="0.45"/><rect x="516.500" y="96" width="1.600" height="2.800" fill="#c06030" opacity="0.45"/><rect x="519.600" y="96" width="2" height="2.800" fill="#c06030" opacity="0.45"/><rect x="531.400" y="96" width="1.600" height="2.800" fill="#6088d0" opacity="0.45"/><rect x="537.600" y="96" width="2.400" height="2.800" fill="#8a8a8a" opacity="0.45"/><rect x="543.800" y="96" width="1.600" height="2.800" fill="#707070" opacity="0.45"/><rect x="546.900" y="96" width="2" height="2.800" fill="#505050" opacity="0.45"/><rect x="550" y="96" width="1.600" height="2.800" fill="#8a8a8a" opacity="0.45"/><rect x="553.100" y="96" width="2" height="2.800" fill="#c06030" opacity="0.45"/><rect x="559.300" y="96" width="2" height="2.800" fill="#d8b800" opacity="0.45"/><rect x="563.600" y="96" width="1.600" height="2.800" fill="#8a8a8a" opacity="0.45"/><rect x="566.700" y="96" width="2" height="2.800" fill="#6088d0" opacity="0.45"/><rect x="457" y="100" width="1.600" height="2.600" fill="#707070" opacity="0.4"/><rect x="461.300" y="100" width="2.400" height="2.600" fill="#707070" opacity="0.4"/><rect x="464.400" y="100" width="1.600" height="2.600" fill="#3a70c8" opacity="0.4"/><rect x="467.500" y="100" width="2.400" height="2.600" fill="#8a8a8a" opacity="0.4"/><rect x="476.800" y="100" width="1.600" height="2.600" fill="#505050" opacity="0.4"/><rect x="479.900" y="100" width="1.600" height="2.600" fill="#6088d0" opacity="0.4"/><rect x="489.200" y="100" width="2.400" height="2.600" fill="#3a70c8" opacity="0.4"/><rect x="495.400" y="100" width="2.400" height="2.600" fill="#b0b0c8" opacity="0.4"/><rect x="498.500" y="100" width="2.400" height="2.600" fill="#b0b0c8" opacity="0.4"/><rect x="506" y="100" width="2.400" height="2.600" fill="#8a8a8a" opacity="0.4"/><rect x="513.400" y="100" width="2.400" height="2.600" fill="#8a8a8a" opacity="0.4"/><rect x="519.600" y="100" width="2" height="2.600" fill="#3a70c8" opacity="0.4"/><rect x="525.800" y="100" width="2.400" height="2.600" fill="#505050" opacity="0.4"/><rect x="532" y="100" width="1.600" height="2.600" fill="#6088d0" opacity="0.4"/><rect x="536.400" y="100" width="1.600" height="2.600" fill="#8a8a8a" opacity="0.4"/><rect x="540.700" y="100" width="1.600" height="2.600" fill="#3a70c8" opacity="0.4"/><rect x="455" y="103.800" width="4" height="112" fill="#dedacb"/><rect x="455.800" y="106" width="2.200" height="2" fill="#444" opacity=".75"/><rect x="455.800" y="109.600" width="2.200" height="2" fill="#444" opacity=".75"/><rect x="455.800" y="113.200" width="2.200" height="2" fill="#444" opacity=".75"/><rect x="455.800" y="116.800" width="2.200" height="2" fill="#444" opacity=".75"/><rect x="455.800" y="120.400" width="2.200" height="2" fill="#444" opacity=".75"/><rect x="455.800" y="124" width="2.200" height="2" fill="#444" opacity=".75"/><rect x="455.800" y="127.600" width="2.200" height="2" fill="#444" opacity=".75"/><rect x="455.800" y="131.200" width="2.200" height="2" fill="#444" opacity=".75"/><rect x="459" y="103.800" width="110.600" height="112" fill="#fefefe"/><rect x="569.600" y="103.800" width="3.200" height="112" fill="#e0e4f4"/><rect x="570" y="130" width="2.400" height="9" fill="#b8c4ec"/><rect x="455" y="215.800" width="117.800" height="2.800" fill="#e6e2d4"/><rect x="520" y="216.500" width="8" height="1.400" fill="#777"/><rect x="532" y="216.500" width="4" height="1.400" fill="#4a4"/><rect x="560" y="216.500" width="9" height="1.400" fill="#88a"/><path d="M463.500 105.300H489" fill="none" stroke="#222" stroke-width="1.600" stroke-dasharray="1.200 .700 2 .800" opacity=".8"/><rect x="480" y="113.200" width="30" height="1.400" fill="#4a3020" opacity=".8"/><path d="M475.400 116V150.800" fill="none" stroke="#888" stroke-width="0.800"/><path d="M484.300 116V150.800" fill="none" stroke="#111" stroke-width="1.200"/><path d="M476 124.300H511.500" fill="none" stroke="#999" stroke-width="0.900"/><path d="M476 137.600H511.500" fill="none" stroke="#111" stroke-width="1.300"/><path d="M475.400 150.800H511.500" fill="none" stroke="#000" stroke-width="2"/><path d="M470.500 117V148" fill="none" stroke="#2a4aa0" stroke-width="1.400" stroke-dasharray="1 2.500"/><path d="M473 117V148" fill="none" stroke="#444" stroke-width="1" stroke-dasharray="1 6"/><rect x="478" y="154.200" width="28" height="1.300" fill="#3a5ab0" opacity=".75"/><path d="M478 152.300H511" fill="none" stroke="#555" stroke-width="0.900" stroke-dasharray="1 5"/><rect x="527" y="113.200" width="31" height="1.400" fill="#222" opacity=".85"/><rect x="523.500" y="115.600" width="36.500" height="2.200" fill="#000"/><path d="M524 116V151M560 116V151" fill="none" stroke="#000" stroke-width="1.300"/><path d="M523.500 150.800H560.500" fill="none" stroke="#000" stroke-width="1.800"/><path d="M524 131H560M524 133.500H560M524 136.200H560M524 139H560M524 143H560M524 146.500H560" fill="none" stroke="#111" stroke-width="1.100"/><path d="M526.500 118V150M545.500 118V150M555.500 118V150M557.500 118V150" fill="none" stroke="#222" stroke-width="1"/><path d="M538 124L555 142M541 122L557 138M544 127l8 9" fill="none" stroke="#555" stroke-width="0.900" stroke-dasharray="1.500 1.500"/><path d="M519 117V148" fill="none" stroke="#5a3020" stroke-width="1.300" stroke-dasharray="1 3"/><path d="M521.500 117V148" fill="none" stroke="#444" stroke-width="1" stroke-dasharray="1 5"/><rect x="528" y="137" width="8" height="1.200" fill="#28a0d0"/><rect x="528" y="140.500" width="9" height="1.200" fill="#28a0d0"/><rect x="526" y="154.200" width="31" height="1.300" fill="#445" opacity=".7"/><path d="M524 152.300H560" fill="none" stroke="#555" stroke-width="0.900" stroke-dasharray="1 4"/><rect x="480" y="176.500" width="30" height="1.300" fill="#3a5ab0" opacity=".7"/><path d="M476 213C477.500 200 478.500 188 481.500 181" fill="none" stroke="#000" stroke-width="1.300"/><path d="M478.500 213C479.500 200 481 190 484.500 182" fill="none" stroke="#555" stroke-width="0.900" stroke-dasharray="2 1"/><path d="M483 198.200H510.500" fill="none" stroke="#000" stroke-width="1.300"/><path d="M475.400 180V213.500H511" fill="none" stroke="#666" stroke-width="0.800"/><path d="M469.500 182V212" fill="none" stroke="#444" stroke-width="1.200" stroke-dasharray="1 2.500"/><path d="M500 186.500h4M500 205h3M485 184.500h10" fill="none" stroke="#777" stroke-width="0.900"/><rect x="494" y="210.800" width="12" height="1.200" fill="#666" opacity=".7"/><rect x="529" y="176.500" width="26" height="1.300" fill="#3a5ab0" opacity=".7"/><path d="M527.500 180V213" fill="none" stroke="#888" stroke-width="1"/><path d="M534 181V211" fill="none" stroke="#000" stroke-width="1.400"/><path d="M540 212.500L548.500 181" fill="none" stroke="#111" stroke-width="1"/><path d="M549.500 181V212" fill="none" stroke="#000" stroke-width="1.200"/><path d="M549.500 212L555.500 183V212" fill="none" stroke="#111" stroke-width="1"/><path d="M527.500 213.200H557" fill="none" stroke="#444" stroke-width="0.900"/><path d="M519 182V212" fill="none" stroke="#444" stroke-width="1.200" stroke-dasharray="1 2.500"/><path d="M522 182V212" fill="none" stroke="#666" stroke-width="1" stroke-dasharray="1 4"/><rect x="528" y="184.500" width="8" height="1.200" fill="#28a0d0"/></g><rect x="378.500" y="279" width="45.500" height="4.500" fill="#eef0fa"/><rect x="378.500" y="283.300" width="45.500" height="19.500" fill="#e9e5d6"/><rect x="378.500" y="283.300" width="45.500" height="1" fill="#2a5cd0"/><rect x="381" y="285.600" width="2" height="3" fill="#c8b400" opacity="0.6"/><rect x="387.200" y="285.600" width="2.400" height="3" fill="#30a030" opacity="0.6"/><rect x="391.600" y="285.600" width="1.600" height="3" fill="#606060" opacity="0.6"/><rect x="396" y="285.600" width="2.400" height="3" fill="#30a030" opacity="0.6"/><rect x="400.400" y="285.600" width="1.600" height="3" fill="#30a030" opacity="0.6"/><rect x="406.500" y="285.600" width="2" height="3" fill="#606060" opacity="0.6"/><rect x="415.300" y="285.600" width="1.600" height="3" fill="#2080d0" opacity="0.6"/><rect x="378.500" y="290" width="45.500" height="12.800" fill="#e9e6d8"/><g><rect x="183" y="270" width="195.500" height="126" fill="#dad6c8"/><rect x="183.600" y="270.400" width="194.400" height="6.400" fill="#e8e4d6"/><rect x="186" y="271.800" width="2" height="3.400" fill="#404040" opacity="0.6"/><rect x="192.600" y="271.800" width="2" height="3.400" fill="#606060" opacity="0.6"/><rect x="199.200" y="271.800" width="1.600" height="3.400" fill="#c8b400" opacity="0.6"/><rect x="205.800" y="271.800" width="2" height="3.400" fill="#30a030" opacity="0.6"/><rect x="212.400" y="271.800" width="1.600" height="3.400" fill="#8a8a8a" opacity="0.6"/><rect x="222.300" y="271.800" width="2.400" height="3.400" fill="#2080d0" opacity="0.6"/><rect x="226.900" y="271.800" width="2.400" height="3.400" fill="#30a030" opacity="0.6"/><rect x="230.200" y="271.800" width="1.600" height="3.400" fill="#2080d0" opacity="0.6"/><rect x="233.500" y="271.800" width="2" height="3.400" fill="#c8b400" opacity="0.6"/><rect x="240.100" y="271.800" width="2.400" height="3.400" fill="#c8b400" opacity="0.6"/><rect x="244.700" y="271.800" width="2" height="3.400" fill="#c8b400" opacity="0.6"/><rect x="248" y="271.800" width="1.600" height="3.400" fill="#505870" opacity="0.6"/><rect x="252.700" y="271.800" width="1.600" height="3.400" fill="#404040" opacity="0.6"/><rect x="260.600" y="271.800" width="2.400" height="3.400" fill="#404040" opacity="0.6"/><rect x="267.200" y="271.800" width="1.600" height="3.400" fill="#c8b400" opacity="0.6"/><rect x="270.500" y="271.800" width="1.600" height="3.400" fill="#30a030" opacity="0.6"/><rect x="277.100" y="271.800" width="2.400" height="3.400" fill="#404040" opacity="0.6"/><rect x="280.400" y="271.800" width="2.400" height="3.400" fill="#8a8a8a" opacity="0.6"/><rect x="283.700" y="271.800" width="1.600" height="3.400" fill="#c03030" opacity="0.6"/><rect x="288.300" y="271.800" width="2.400" height="3.400" fill="#505870" opacity="0.6"/><rect x="292.900" y="271.800" width="2.400" height="3.400" fill="#2080d0" opacity="0.6"/><rect x="296.200" y="271.800" width="1.600" height="3.400" fill="#505870" opacity="0.6"/><rect x="299.500" y="271.800" width="2" height="3.400" fill="#8a8a8a" opacity="0.6"/><rect x="302.800" y="271.800" width="2.400" height="3.400" fill="#e0d040" opacity="0.6"/><rect x="309.400" y="271.800" width="1.600" height="3.400" fill="#30a030" opacity="0.6"/><rect x="312.700" y="271.800" width="2.400" height="3.400" fill="#e0d040" opacity="0.6"/><rect x="316" y="271.800" width="2.400" height="3.400" fill="#606060" opacity="0.6"/><rect x="320.600" y="271.800" width="1.600" height="3.400" fill="#8040c0" opacity="0.6"/><rect x="323.900" y="271.800" width="2.400" height="3.400" fill="#e0d040" opacity="0.6"/><rect x="327.200" y="271.800" width="2" height="3.400" fill="#606060" opacity="0.6"/><rect x="330.500" y="271.800" width="2" height="3.400" fill="#707070" opacity="0.6"/><rect x="337.100" y="271.800" width="2.400" height="3.400" fill="#30a030" opacity="0.6"/><rect x="343.700" y="271.800" width="1.600" height="3.400" fill="#505870" opacity="0.6"/><rect x="347" y="271.800" width="2.400" height="3.400" fill="#c8b400" opacity="0.6"/><rect x="350.300" y="271.800" width="2.400" height="3.400" fill="#c03030" opacity="0.6"/><rect x="353.600" y="271.800" width="1.600" height="3.400" fill="#707070" opacity="0.6"/><rect x="361.600" y="271.800" width="2.400" height="3.400" fill="#8a8a8a" opacity="0.6"/><rect x="369.500" y="271.800" width="2" height="3.400" fill="#606060" opacity="0.6"/><rect x="184.500" y="276.800" width="190.700" height="112.200" fill="#000"/><rect x="375.200" y="276.800" width="3.100" height="112.200" fill="#cdd2ee"/><rect x="184.500" y="389" width="190.700" height="3" fill="#c6d2f6"/><rect x="185.500" y="389.300" width="46" height="2.400" fill="#f8f8ff"/><rect x="184.500" y="392" width="194" height="3.600" fill="#ebe8dc"/><rect x="186" y="393" width="11" height="1.600" fill="#444" opacity=".8"/><rect x="260" y="393" width="20" height="1.600" fill="#555" opacity=".7"/><path d="M195 288.500H375" fill="none" stroke="#d80010" stroke-width="3"/><path d="M196.200 287V322" fill="none" stroke="#d80010" stroke-width="2.500"/><path d="M203 292.700H279.500M203.500 292.200V312" fill="none" stroke="#1818e8" stroke-width="1.300"/><path d="M185 306.500H202M185 313H196M185 317.500H196M185 321H196M185 340H205" fill="none" stroke="#b00008" stroke-width="1"/><path d="M197 332.500H215M237 332.500H278M281 332.500H349M352 332.500H375" fill="none" stroke="#d80010" stroke-width="1.400"/><path d="M210 297V322M230.500 300V322M247.500 292V312M275 300V320M296 307V322M312.800 293V335" fill="none" stroke="#b00008" stroke-width="1"/><path d="M349.500 290V360M361 300V350M313 335V350" fill="none" stroke="#b00008" stroke-width="1.100"/><path d="M350 322.500H365M329 362H345M350 347H363" fill="none" stroke="#b00008" stroke-width="1"/><path d="M222.500 338V362M201 360H222M185 369.500H250M230 369.500V388M192.500 370V388M295 376H375M250 369.500V352H262" fill="none" stroke="#b00008" stroke-width="1.200"/><path d="M207 345.500H222M262 381h20M300 362v14" fill="none" stroke="#b00008" stroke-width="1"/><path d="M233 308.325V305H241.500V314.500H236.400" fill="none" stroke="#10d8d8" stroke-width="1" opacity=".8"/><path d="M262.500 308.325V305H271.0V314.500H265.900" fill="none" stroke="#10d8d8" stroke-width="1" opacity=".8"/><path d="M335 308.800V306H340V314H337" fill="none" stroke="#10d8d8" stroke-width="1" opacity=".8"/><path d="M363.500 313.800V311H369.500V319H365.900" fill="none" stroke="#10d8d8" stroke-width="1" opacity=".8"/><path d="M363.500 328.800V326H369.500V334H365.900" fill="none" stroke="#10d8d8" stroke-width="1" opacity=".8"/><path d="M363.500 343.800V341H369.500V349H365.900" fill="none" stroke="#10d8d8" stroke-width="1" opacity=".8"/><path d="M204 339.100V337H208V343H205.600" fill="none" stroke="#10d8d8" stroke-width="1" opacity=".8"/><path d="M240.500 338.100V336H244.500V342H242.100" fill="none" stroke="#10d8d8" stroke-width="1" opacity=".8"/><path d="M264 338.100V336H268V342H265.600" fill="none" stroke="#10d8d8" stroke-width="1" opacity=".8"/><path d="M240.500 369.950V367.500H244.0V374.500H241.900" fill="none" stroke="#10d8d8" stroke-width="1" opacity=".8"/><path d="M296 374.450V372H299.500V379H297.400" fill="none" stroke="#10d8d8" stroke-width="1" opacity=".8"/><path d="M240 382.750V381H243.500V386H241.400" fill="none" stroke="#10d8d8" stroke-width="1" opacity=".8"/><rect x="240.900" y="344.500" width="3" height="1.200" fill="#d8d820" opacity=".6"/><rect x="299.900" y="350.100" width="3" height="1" fill="#c8c8c8" opacity=".6"/><rect x="294.700" y="312.400" width="3" height="1.200" fill="#20d020" opacity=".6"/><rect x="343.900" y="338.300" width="1.500" height="0.900" fill="#20d020" opacity=".6"/><rect x="309.200" y="374" width="3" height="1.200" fill="#e02020" opacity=".6"/><rect x="202.600" y="365.700" width="1" height="1" fill="#e8e8e8" opacity=".6"/><rect x="334.200" y="369.900" width="3" height="1.200" fill="#d8d820" opacity=".6"/><rect x="323.600" y="375" width="3" height="1" fill="#20d020" opacity=".6"/><rect x="325.200" y="347.500" width="2" height="0.900" fill="#e8e8e8" opacity=".6"/><rect x="206.200" y="340" width="3" height="1.200" fill="#d8d820" opacity=".6"/><rect x="347.100" y="333.300" width="3" height="1.200" fill="#c8c8c8" opacity=".6"/><rect x="260.400" y="348.200" width="1.500" height="1" fill="#e02020" opacity=".6"/><rect x="317.300" y="379.500" width="2" height="1.200" fill="#c8c8c8" opacity=".6"/><rect x="315.500" y="309.800" width="2" height="1.200" fill="#c8c8c8" opacity=".6"/><rect x="355.600" y="346.800" width="1.500" height="1.200" fill="#20d020" opacity=".6"/><rect x="343" y="347.200" width="1" height="0.900" fill="#d8d820" opacity=".6"/><rect x="282.900" y="353.100" width="1" height="1" fill="#10d0d0" opacity=".6"/><rect x="337.700" y="332.400" width="1" height="1" fill="#e8e8e8" opacity=".6"/><rect x="273.500" y="332.800" width="1" height="1.200" fill="#20d020" opacity=".6"/><rect x="305.700" y="299.100" width="2" height="1.200" fill="#20d020" opacity=".6"/><rect x="351.500" y="384.200" width="1.500" height="0.900" fill="#e02020" opacity=".6"/><rect x="253.300" y="302" width="1" height="0.900" fill="#e02020" opacity=".6"/><rect x="367.100" y="321.500" width="1.500" height="1.200" fill="#d8d820" opacity=".6"/><rect x="207.300" y="374" width="2" height="0.900" fill="#d8d820" opacity=".6"/><rect x="354.200" y="329.400" width="3" height="1.200" fill="#10d0d0" opacity=".6"/><rect x="349.100" y="357" width="2" height="1" fill="#20d020" opacity=".6"/><rect x="309.100" y="360.100" width="3" height="1" fill="#d8d820" opacity=".6"/><rect x="289.600" y="344.900" width="3" height="1.200" fill="#20d020" opacity=".6"/><rect x="254.200" y="329.300" width="1.500" height="0.900" fill="#e02020" opacity=".6"/><rect x="309" y="325.300" width="2" height="1.200" fill="#d8d820" opacity=".6"/><rect x="321.600" y="362.200" width="1" height="1.200" fill="#20d020" opacity=".6"/><rect x="203.700" y="328.600" width="3" height="1" fill="#20d020" opacity=".6"/><rect x="301.900" y="324.100" width="1.500" height="1" fill="#d8d820" opacity=".6"/><rect x="330.400" y="371.800" width="2" height="1" fill="#d8d820" opacity=".6"/><rect x="218" y="369" width="1.500" height="1" fill="#e02020" opacity=".6"/><rect x="286" y="354.500" width="1.500" height="1" fill="#d8d820" opacity=".6"/><rect x="232.200" y="334.600" width="1" height="0.900" fill="#20d020" opacity=".6"/><rect x="303.300" y="381.400" width="1.500" height="1" fill="#20d020" opacity=".6"/><rect x="339.300" y="382.400" width="2" height="1.200" fill="#20d020" opacity=".6"/><rect x="311.800" y="375.500" width="2" height="0.900" fill="#10d0d0" opacity=".6"/><rect x="335.400" y="298.100" width="2" height="1.200" fill="#e8e8e8" opacity=".6"/><rect x="231.600" y="320.400" width="1" height="1.200" fill="#c8c8c8" opacity=".6"/><rect x="259.400" y="306.800" width="2" height="1" fill="#d8d820" opacity=".6"/><rect x="259.600" y="332.900" width="3" height="0.900" fill="#10d0d0" opacity=".6"/><rect x="358.300" y="309.200" width="3" height="1.200" fill="#20d020" opacity=".6"/><rect x="369.700" y="334.500" width="1.500" height="0.900" fill="#20d020" opacity=".6"/><rect x="328.200" y="371.100" width="2" height="1.200" fill="#20d020" opacity=".6"/><rect x="258.700" y="315.700" width="2" height="0.900" fill="#20d020" opacity=".6"/><rect x="339.400" y="299.100" width="1.500" height="1" fill="#c8c8c8" opacity=".6"/><rect x="299.200" y="296.200" width="1" height="0.900" fill="#20d020" opacity=".6"/><rect x="286.500" y="316.800" width="3" height="0.900" fill="#20d020" opacity=".6"/><rect x="361.500" y="350.700" width="1.500" height="1" fill="#d8d820" opacity=".6"/><rect x="367.200" y="344.200" width="1" height="1" fill="#c8c8c8" opacity=".6"/><rect x="238" y="306.100" width="1" height="0.900" fill="#c8c8c8" opacity=".6"/><rect x="241.200" y="319.900" width="1.500" height="0.900" fill="#c8c8c8" opacity=".6"/><rect x="283.900" y="347" width="1" height="1" fill="#10d0d0" opacity=".6"/><rect x="242.700" y="351.200" width="3" height="0.900" fill="#e02020" opacity=".6"/><rect x="281.300" y="365.700" width="1" height="0.900" fill="#20d020" opacity=".6"/><rect x="207.900" y="299.500" width="1" height="1.200" fill="#10d0d0" opacity=".6"/><rect x="214.800" y="340.700" width="1.500" height="1" fill="#d8d820" opacity=".6"/><rect x="212.300" y="330.100" width="2" height="1" fill="#10d0d0" opacity=".6"/><rect x="245.600" y="384.900" width="1" height="0.900" fill="#10d0d0" opacity=".6"/><rect x="295.600" y="360.200" width="1" height="1.200" fill="#10d0d0" opacity=".6"/><rect x="230.700" y="329" width="3" height="1.200" fill="#e02020" opacity=".6"/><rect x="337.800" y="351.700" width="1" height="1" fill="#10d0d0" opacity=".6"/><rect x="307.900" y="364.200" width="3" height="1.200" fill="#d8d820" opacity=".6"/><rect x="271.900" y="296.600" width="2" height="1.200" fill="#e8e8e8" opacity=".6"/><rect x="301.500" y="368.100" width="3" height="0.900" fill="#e8e8e8" opacity=".6"/><rect x="351.300" y="380.200" width="2" height="0.900" fill="#d8d820" opacity=".6"/><rect x="279.800" y="306.200" width="3" height="1.200" fill="#c8c8c8" opacity=".6"/><rect x="218.700" y="324" width="1" height="1.200" fill="#e02020" opacity=".6"/><rect x="323.300" y="338.100" width="3" height="0.900" fill="#e8e8e8" opacity=".6"/><rect x="290.700" y="346.400" width="3" height="0.900" fill="#20d020" opacity=".6"/><rect x="340.900" y="326.100" width="1" height="0.900" fill="#c8c8c8" opacity=".6"/><rect x="345.200" y="356.300" width="2" height="1.200" fill="#c8c8c8" opacity=".6"/><rect x="251.500" y="303.100" width="1.500" height="0.900" fill="#c8c8c8" opacity=".6"/><rect x="295.400" y="304.100" width="1" height="1.200" fill="#e02020" opacity=".6"/><rect x="255.800" y="346.300" width="1" height="0.900" fill="#c8c8c8" opacity=".6"/><rect x="371.700" y="353.800" width="3" height="1" fill="#10d0d0" opacity=".6"/><rect x="263.200" y="331.100" width="3" height="0.900" fill="#d8d820" opacity=".6"/><rect x="264.600" y="316.400" width="1.500" height="1" fill="#10d0d0" opacity=".6"/><rect x="318.800" y="363.800" width="3" height="0.900" fill="#20d020" opacity=".6"/><rect x="310.600" y="376.700" width="1.500" height="0.900" fill="#e8e8e8" opacity=".6"/><rect x="285.600" y="339" width="3" height="1.200" fill="#20d020" opacity=".6"/><rect x="323.700" y="311.900" width="1.500" height="0.900" fill="#d8d820" opacity=".6"/><rect x="300.700" y="323.700" width="2" height="1.200" fill="#e8e8e8" opacity=".6"/><rect x="321.300" y="332.600" width="2" height="0.900" fill="#c8c8c8" opacity=".6"/><rect x="252.800" y="319.400" width="3" height="0.900" fill="#c8c8c8" opacity=".6"/><rect x="229.600" y="327.800" width="3" height="0.900" fill="#d8d820" opacity=".6"/><rect x="272" y="358.500" width="1.500" height="1" fill="#20d020" opacity=".6"/><rect x="299.800" y="377.100" width="1" height="1" fill="#20d020" opacity=".6"/><rect x="370.800" y="301.600" width="1" height="1" fill="#10d0d0" opacity=".6"/><rect x="356.700" y="376.100" width="1" height="0.900" fill="#20d020" opacity=".6"/><rect x="346.900" y="317" width="2" height="0.900" fill="#e8e8e8" opacity=".6"/><rect x="232.200" y="359.100" width="1" height="1" fill="#c8c8c8" opacity=".6"/><rect x="229.200" y="299.100" width="3" height="0.900" fill="#e8e8e8" opacity=".6"/><rect x="325.400" y="302.800" width="2" height="1" fill="#20d020" opacity=".6"/><rect x="206.200" y="336.200" width="2" height="0.900" fill="#20d020" opacity=".6"/><rect x="205.100" y="325.200" width="3" height="0.900" fill="#10d0d0" opacity=".6"/><rect x="236.100" y="348.200" width="3" height="0.900" fill="#10d0d0" opacity=".6"/><rect x="293.600" y="305.800" width="1" height="1.200" fill="#d8d820" opacity=".6"/><rect x="274.400" y="334.900" width="2" height="0.900" fill="#e02020" opacity=".6"/><rect x="290.800" y="358.800" width="2" height="1" fill="#20d020" opacity=".6"/><rect x="250.800" y="356.500" width="2" height="0.900" fill="#20d020" opacity=".6"/><rect x="329.700" y="382.500" width="1" height="1.200" fill="#20d020" opacity=".6"/><rect x="284.900" y="327" width="2" height="1.200" fill="#20d020" opacity=".6"/><rect x="325.200" y="362.500" width="1.500" height="0.900" fill="#20d020" opacity=".6"/><rect x="263.800" y="378.700" width="1" height="0.900" fill="#10d0d0" opacity=".6"/><rect x="360.300" y="307.900" width="3" height="1.200" fill="#d8d820" opacity=".6"/><rect x="251.700" y="312" width="2" height="0.900" fill="#10d0d0" opacity=".6"/><rect x="321.300" y="304.800" width="3" height="1" fill="#e8e8e8" opacity=".6"/><rect x="217.200" y="319.600" width="1.500" height="0.900" fill="#20d020" opacity=".6"/><rect x="282.300" y="319.700" width="2" height="1" fill="#20d020" opacity=".6"/><rect x="362.500" y="335.800" width="1" height="1" fill="#c8c8c8" opacity=".6"/><rect x="285.700" y="385.600" width="2" height="1.200" fill="#e8e8e8" opacity=".6"/><rect x="217.100" y="305.300" width="1" height="0.900" fill="#c8c8c8" opacity=".6"/><rect x="320.100" y="346.600" width="3" height="1.200" fill="#20d020" opacity=".6"/><rect x="222.100" y="350.300" width="3" height="0.900" fill="#c8c8c8" opacity=".6"/><rect x="293.700" y="310.500" width="1.500" height="1" fill="#e8e8e8" opacity=".6"/><rect x="263.600" y="321.700" width="3" height="1" fill="#c8c8c8" opacity=".6"/><rect x="363.300" y="329.900" width="2" height="1.200" fill="#e02020" opacity=".6"/><rect x="285.600" y="343.100" width="2" height="1.200" fill="#20d020" opacity=".6"/><rect x="283.300" y="349.700" width="1" height="0.900" fill="#20d020" opacity=".6"/><rect x="332.500" y="355.200" width="1.500" height="1.200" fill="#10d0d0" opacity=".6"/><rect x="307.500" y="313.100" width="1.500" height="0.900" fill="#c8c8c8" opacity=".6"/><rect x="339.800" y="379.300" width="1" height="1.200" fill="#10d0d0" opacity=".6"/><rect x="248.700" y="354.800" width="1.500" height="1" fill="#e8e8e8" opacity=".6"/><rect x="336.300" y="351.700" width="1" height="1" fill="#20d020" opacity=".6"/><rect x="306.400" y="341" width="1" height="1" fill="#10d0d0" opacity=".6"/><rect x="255.600" y="374.200" width="1.500" height="0.900" fill="#20d020" opacity=".6"/><rect x="319" y="297" width="7" height="1" fill="#10c8c8" opacity=".75"/><rect x="319" y="299.500" width="7" height="1" fill="#20c830" opacity=".75"/><rect x="319" y="302" width="7" height="1" fill="#10c8c8" opacity=".75"/><rect x="319" y="304.500" width="7" height="1" fill="#20c830" opacity=".75"/><rect x="319" y="307" width="7" height="1" fill="#10c8c8" opacity=".75"/><rect x="319" y="309.500" width="7" height="1" fill="#20c830" opacity=".75"/><rect x="319" y="312" width="7" height="1" fill="#10c8c8" opacity=".75"/><rect x="319" y="320" width="7" height="1" fill="#c8c820" opacity=".75"/><rect x="319" y="322.500" width="7" height="1" fill="#20c830" opacity=".75"/><rect x="319" y="325" width="7" height="1" fill="#c8c820" opacity=".75"/><rect x="319" y="327.500" width="7" height="1" fill="#20c830" opacity=".75"/><rect x="319" y="330" width="7" height="1" fill="#c8c820" opacity=".75"/><rect x="319" y="332.500" width="7" height="1" fill="#20c830" opacity=".75"/></g><g><rect x="423.400" y="264" width="146.200" height="131" fill="#dcd8c9"/><rect x="423.900" y="264.500" width="145.200" height="19" fill="#ebe7d9"/><rect x="424.500" y="265" width="2.500" height="2.500" fill="#20a030"/><path d="M429 266.600H524" fill="none" stroke="#1a1a1a" stroke-width="2.200" stroke-dasharray="1.600 .900 2.400 1.100 1 .800 3 2.600" opacity=".72"/><path d="M530 266.600H566" fill="none" stroke="#333" stroke-width="2" stroke-dasharray="1 2.500" opacity=".6"/><rect x="432.400" y="270.400" width="2" height="3" fill="#7090d0" opacity="0.55"/><rect x="437.800" y="270.400" width="2.400" height="3" fill="#7090d0" opacity="0.55"/><rect x="443.200" y="270.400" width="2" height="3" fill="#444" opacity="0.55"/><rect x="445.900" y="270.400" width="1.600" height="3" fill="#666" opacity="0.55"/><rect x="448.600" y="270.400" width="2" height="3" fill="#7090d0" opacity="0.55"/><rect x="451.300" y="270.400" width="1.600" height="3" fill="#444" opacity="0.55"/><rect x="454" y="270.400" width="1.600" height="3" fill="#666" opacity="0.55"/><rect x="459.400" y="270.400" width="2" height="3" fill="#666" opacity="0.55"/><rect x="462.100" y="270.400" width="2.400" height="3" fill="#444" opacity="0.55"/><rect x="465.900" y="270.400" width="1.600" height="3" fill="#3060c0" opacity="0.55"/><rect x="471.300" y="270.400" width="2" height="3" fill="#7090d0" opacity="0.55"/><rect x="474" y="270.400" width="1.600" height="3" fill="#666" opacity="0.55"/><rect x="479.400" y="270.400" width="2" height="3" fill="#888" opacity="0.55"/><rect x="484.800" y="270.400" width="1.600" height="3" fill="#444" opacity="0.55"/><rect x="495.600" y="270.400" width="2.400" height="3" fill="#5078c8" opacity="0.55"/><rect x="498.300" y="270.400" width="2.400" height="3" fill="#3060c0" opacity="0.55"/><rect x="501" y="270.400" width="2" height="3" fill="#c0a020" opacity="0.55"/><rect x="509.100" y="270.400" width="2" height="3" fill="#666" opacity="0.55"/><rect x="511.800" y="270.400" width="2.400" height="3" fill="#666" opacity="0.55"/><rect x="514.500" y="270.400" width="1.600" height="3" fill="#666" opacity="0.55"/><rect x="517.200" y="270.400" width="2.400" height="3" fill="#c0a020" opacity="0.55"/><rect x="519.900" y="270.400" width="1.600" height="3" fill="#888" opacity="0.55"/><rect x="525.300" y="270.400" width="2.400" height="3" fill="#888" opacity="0.55"/><rect x="528" y="270.400" width="2" height="3" fill="#c0a020" opacity="0.55"/><rect x="531.800" y="270.400" width="1.600" height="3" fill="#2a50b0" opacity="0.55"/><rect x="534.500" y="270.400" width="2.400" height="3" fill="#c0a020" opacity="0.55"/><rect x="537.200" y="270.400" width="2" height="3" fill="#2a50b0" opacity="0.55"/><rect x="542.600" y="270.400" width="2.400" height="3" fill="#7090d0" opacity="0.55"/><rect x="550.700" y="270.400" width="2.400" height="3" fill="#3060c0" opacity="0.55"/><rect x="554.400" y="270.400" width="1.600" height="3" fill="#888" opacity="0.55"/><rect x="557.100" y="270.400" width="2" height="3" fill="#3060c0" opacity="0.55"/><rect x="559.800" y="270.400" width="1.600" height="3" fill="#666" opacity="0.55"/><rect x="562.500" y="270.400" width="1.600" height="3" fill="#888" opacity="0.55"/><rect x="427" y="275.400" width="1.600" height="2.600" fill="#8a8a8a" opacity="0.45"/><rect x="431.300" y="275.400" width="2" height="2.600" fill="#606060" opacity="0.45"/><rect x="440.600" y="275.400" width="1.600" height="2.600" fill="#30a030" opacity="0.45"/><rect x="445" y="275.400" width="1.600" height="2.600" fill="#c03030" opacity="0.45"/><rect x="428" y="279.300" width="19" height="3.400" fill="#fff"/><rect x="461" y="279.300" width="106" height="3.400" fill="#fff"/><rect x="452" y="280" width="1.400" height="2" fill="#333"/><rect x="423.900" y="283.600" width="143.300" height="3.400" fill="#e2e2ea"/><rect x="529" y="283.600" width="38.200" height="3.400" fill="#b8c8ec"/><rect x="447" y="284.500" width="1.400" height="1.600" fill="#333"/><rect x="547" y="284.500" width="1.400" height="1.600" fill="#335"/><rect x="423.900" y="287" width="6" height="100.500" fill="#dedacb"/><rect x="429.900" y="287" width="137.300" height="100.500" fill="#fefefe"/><rect x="567.200" y="283.600" width="2.400" height="104" fill="#e4e6f4"/><rect x="426" y="288.200" width="2" height="1.800" fill="#222" opacity=".8"/><rect x="426" y="291.250" width="2" height="1.800" fill="#222" opacity=".8"/><rect x="426" y="294.300" width="2" height="1.800" fill="#222" opacity=".8"/><rect x="426" y="297.350" width="2" height="1.800" fill="#222" opacity=".8"/><rect x="426" y="300.400" width="2" height="1.800" fill="#222" opacity=".8"/><rect x="426" y="303.450" width="2" height="1.800" fill="#222" opacity=".8"/><rect x="426" y="306.500" width="2" height="1.800" fill="#222" opacity=".8"/><rect x="426" y="312.600" width="2" height="1.800" fill="#222" opacity=".8"/><rect x="426" y="315.650" width="2" height="1.800" fill="#222" opacity=".8"/><rect x="426" y="318.700" width="2" height="1.800" fill="#222" opacity=".8"/><rect x="426" y="321.750" width="2" height="1.800" fill="#222" opacity=".8"/><rect x="426" y="324.800" width="2" height="1.800" fill="#222" opacity=".8"/><rect x="426" y="327.850" width="2" height="1.800" fill="#222" opacity=".8"/><rect x="426" y="330.900" width="2" height="1.800" fill="#222" opacity=".8"/><rect x="426" y="333.950" width="2" height="1.800" fill="#222" opacity=".8"/><rect x="426" y="337" width="2" height="1.800" fill="#222" opacity=".8"/><rect x="426" y="343.100" width="2" height="1.800" fill="#222" opacity=".8"/><rect x="426" y="346.150" width="2" height="1.800" fill="#222" opacity=".8"/><rect x="426" y="349.200" width="2" height="1.800" fill="#222" opacity=".8"/><rect x="426" y="352.250" width="2" height="1.800" fill="#222" opacity=".8"/><rect x="426" y="355.300" width="2" height="1.800" fill="#222" opacity=".8"/><rect x="426" y="358.350" width="2" height="1.800" fill="#222" opacity=".8"/><rect x="426" y="361.400" width="2" height="1.800" fill="#222" opacity=".8"/><rect x="426" y="364.450" width="2" height="1.800" fill="#222" opacity=".8"/><rect x="426" y="370.550" width="2" height="1.800" fill="#222" opacity=".8"/><rect x="426" y="373.600" width="2" height="1.800" fill="#222" opacity=".8"/><rect x="426" y="376.650" width="2" height="1.800" fill="#222" opacity=".8"/><rect x="426" y="379.700" width="2" height="1.800" fill="#222" opacity=".8"/><rect x="426" y="382.750" width="2" height="1.800" fill="#222" opacity=".8"/><path d="M431 288.700H437M447 288.700H458M475 288.700H492M529 288.700H537" fill="none" stroke="#181818" stroke-width="1.300" stroke-dasharray="1.300 .700" opacity="0.59"/><path d="M431 291.900H437M447 291.900H458M475 291.900H492M529 291.900H537" fill="none" stroke="#181818" stroke-width="1.300" stroke-dasharray="1.300 .700" opacity="0.59"/><path d="M431 295H437M447 295H458M475 295H492M529 295H537" fill="none" stroke="#181818" stroke-width="1.300" stroke-dasharray="1.300 .700" opacity="0.59"/><path d="M431 298.100H437M447 298.100H458M475 298.100H492M529 298.100H537" fill="none" stroke="#181818" stroke-width="1.300" stroke-dasharray="1.300 .700" opacity="0.59"/><path d="M430 300H567" fill="none" stroke="#333" stroke-width="1" stroke-dasharray="1 1.200"/><path d="M430 315.300H567" fill="none" stroke="#333" stroke-width="1" stroke-dasharray="1 1.200"/><path d="M430 335.300H567" fill="none" stroke="#333" stroke-width="1" stroke-dasharray="1 1.200"/><path d="M430 351.900H567" fill="none" stroke="#333" stroke-width="1" stroke-dasharray="1 1.200"/><path d="M431 307.900H444M446 307.900H470M472 307.900H497" fill="none" stroke="#181818" stroke-width="1.700" stroke-dasharray="1.300 .700" opacity="0.77"/><path d="M431 310.800H445M455 310.800H467M495 310.800H508M549 310.800H553" fill="none" stroke="#181818" stroke-width="1.600" stroke-dasharray="1.300 .700" opacity="0.72"/><path d="M431 313.500H436M529 313.500H545" fill="none" stroke="#181818" stroke-width="1.300" stroke-dasharray="1.300 .700" opacity="0.59"/><path d="M431 317.200H436M447 317.200H452M529 317.200H548" fill="none" stroke="#181818" stroke-width="1.300" stroke-dasharray="1.300 .700" opacity="0.59"/><path d="M431 320H436M529 320H548" fill="none" stroke="#181818" stroke-width="1.300" stroke-dasharray="1.300 .700" opacity="0.59"/><path d="M430 318.600H567" fill="none" stroke="#999" stroke-width="0.800"/><path d="M431 330H444M446 330H470M472 330H497" fill="none" stroke="#181818" stroke-width="1.700" stroke-dasharray="1.300 .700" opacity="0.77"/><path d="M431 333.200H445M455 333.200H467M495 333.200H508M549 333.200H553" fill="none" stroke="#181818" stroke-width="1.600" stroke-dasharray="1.300 .700" opacity="0.72"/><path d="M431 338.800H436" fill="none" stroke="#181818" stroke-width="1.300" stroke-dasharray="1.300 .700" opacity="0.51"/><path d="M431 342H436" fill="none" stroke="#181818" stroke-width="1.300" stroke-dasharray="1.300 .700" opacity="0.51"/><path d="M431 345.200H436" fill="none" stroke="#181818" stroke-width="1.300" stroke-dasharray="1.300 .700" opacity="0.51"/><path d="M431 348.700H436" fill="none" stroke="#181818" stroke-width="1.300" stroke-dasharray="1.300 .700" opacity="0.51"/><path d="M431 353.600H436M445 353.600H450M477 353.600H481" fill="none" stroke="#181818" stroke-width="1.400" stroke-dasharray="1.300 .700" opacity="0.64"/><path d="M446 356H450M478 356H481" fill="none" stroke="#181818" stroke-width="1.200" stroke-dasharray="1.300 .700" opacity="0.51"/><path d="M430 350.500H567" fill="none" stroke="#888" stroke-width="0.800"/><path d="M431 365.300H443M446 365.300H455M457 365.300H466M469 365.300H484M487 365.300H502M505 365.300H514M515.500 365.300H524.500M526 365.300H532M533.500 365.300H548.500" fill="none" stroke="#181818" stroke-width="1.800" stroke-dasharray="1.300 .700" opacity="0.77"/><path d="M431 371.500H443M446 371.500H461M463 371.500H469M470.500 371.500H482.500M484 371.500H493M496 371.500H505M508 371.500H523M526 371.500H532M533.500 371.500H542.500M545.500 371.500H546" fill="none" stroke="#181818" stroke-width="1.800" stroke-dasharray="1.300 .700" opacity="0.77"/><path d="M431 377.300H440M443 377.300H449M452 377.300H461M462.500 377.300H468.500M470.500 377.300H479.500M481.500 377.300H496.500M499.500 377.300H508.500M510.500 377.300H522.500M524 377.300H536M537.500 377.300H541" fill="none" stroke="#181818" stroke-width="1.800" stroke-dasharray="1.300 .700" opacity="0.77"/><path d="M431 383.200H446M447.500 383.200H456.500M458.500 383.200H464.500M467.500 383.200H479.500M481.500 383.200H490.500M492 383.200H501M503 383.200H509M512 383.200H518M520 383.200H529M532 383.200H544" fill="none" stroke="#181818" stroke-width="1.800" stroke-dasharray="1.300 .700" opacity="0.77"/><path d="M430 368.600H567M430 374.500H567M430 380.300H567" fill="none" stroke="#999" stroke-width="0.800"/><path d="M528.800 287V387" fill="none" stroke="#555" stroke-width="0.900" stroke-dasharray="1 1.500"/><rect x="423.900" y="387.500" width="145.200" height="4" fill="#e6e2d4"/><rect x="427" y="388.500" width="4" height="1.800" fill="#444"/><rect x="436" y="388.500" width="50" height="1.800" fill="#555" opacity=".7"/><rect x="492" y="388.500" width="14" height="1.800" fill="#777" opacity=".6"/><rect x="512" y="388.500" width="2" height="1.800" fill="#444"/><rect x="423.900" y="391.500" width="145.200" height="3" fill="#e9e6da"/><rect x="427" y="392.300" width="3" height="1.400" fill="#333"/><rect x="540" y="392.300" width="5" height="1.400" fill="#555"/></g></svg>
<div id="status"></div>
<svg style="left:0;top:0" width="600" height="436" viewBox="0 0 600 436" aria-label="レディ 壁紙サイズ:" role="img"><title>レディ 壁紙サイズ:</title><g font-size="12" fill="#000" stroke="#000" stroke-width=".2"><text x="7.300" y="425.400" textLength="23.500" lengthAdjust="spacingAndGlyphs">レディ</text><text x="450.300" y="425.100" textLength="53.200" lengthAdjust="spacingAndGlyphs">壁紙サイズ:</text></g><rect x="444" y="411" width="1" height="19" fill="#c9c5b2"/><rect x="445" y="411" width="1" height="19" fill="#fff"/><rect x="592" y="420" width="2" height="2" fill="#fff"/><rect x="591" y="419" width="2" height="2" fill="#b8b4a2"/><rect x="588" y="424" width="2" height="2" fill="#fff"/><rect x="587" y="423" width="2" height="2" fill="#b8b4a2"/><rect x="592" y="424" width="2" height="2" fill="#fff"/><rect x="591" y="423" width="2" height="2" fill="#b8b4a2"/><rect x="584" y="428" width="2" height="2" fill="#fff"/><rect x="583" y="427" width="2" height="2" fill="#b8b4a2"/><rect x="588" y="428" width="2" height="2" fill="#fff"/><rect x="587" y="427" width="2" height="2" fill="#b8b4a2"/><rect x="592" y="428" width="2" height="2" fill="#fff"/><rect x="591" y="427" width="2" height="2" fill="#b8b4a2"/></svg>
<div id="stxt">1280 x 1024</div>
<div id="bb"></div>
</div>
</body></html>
